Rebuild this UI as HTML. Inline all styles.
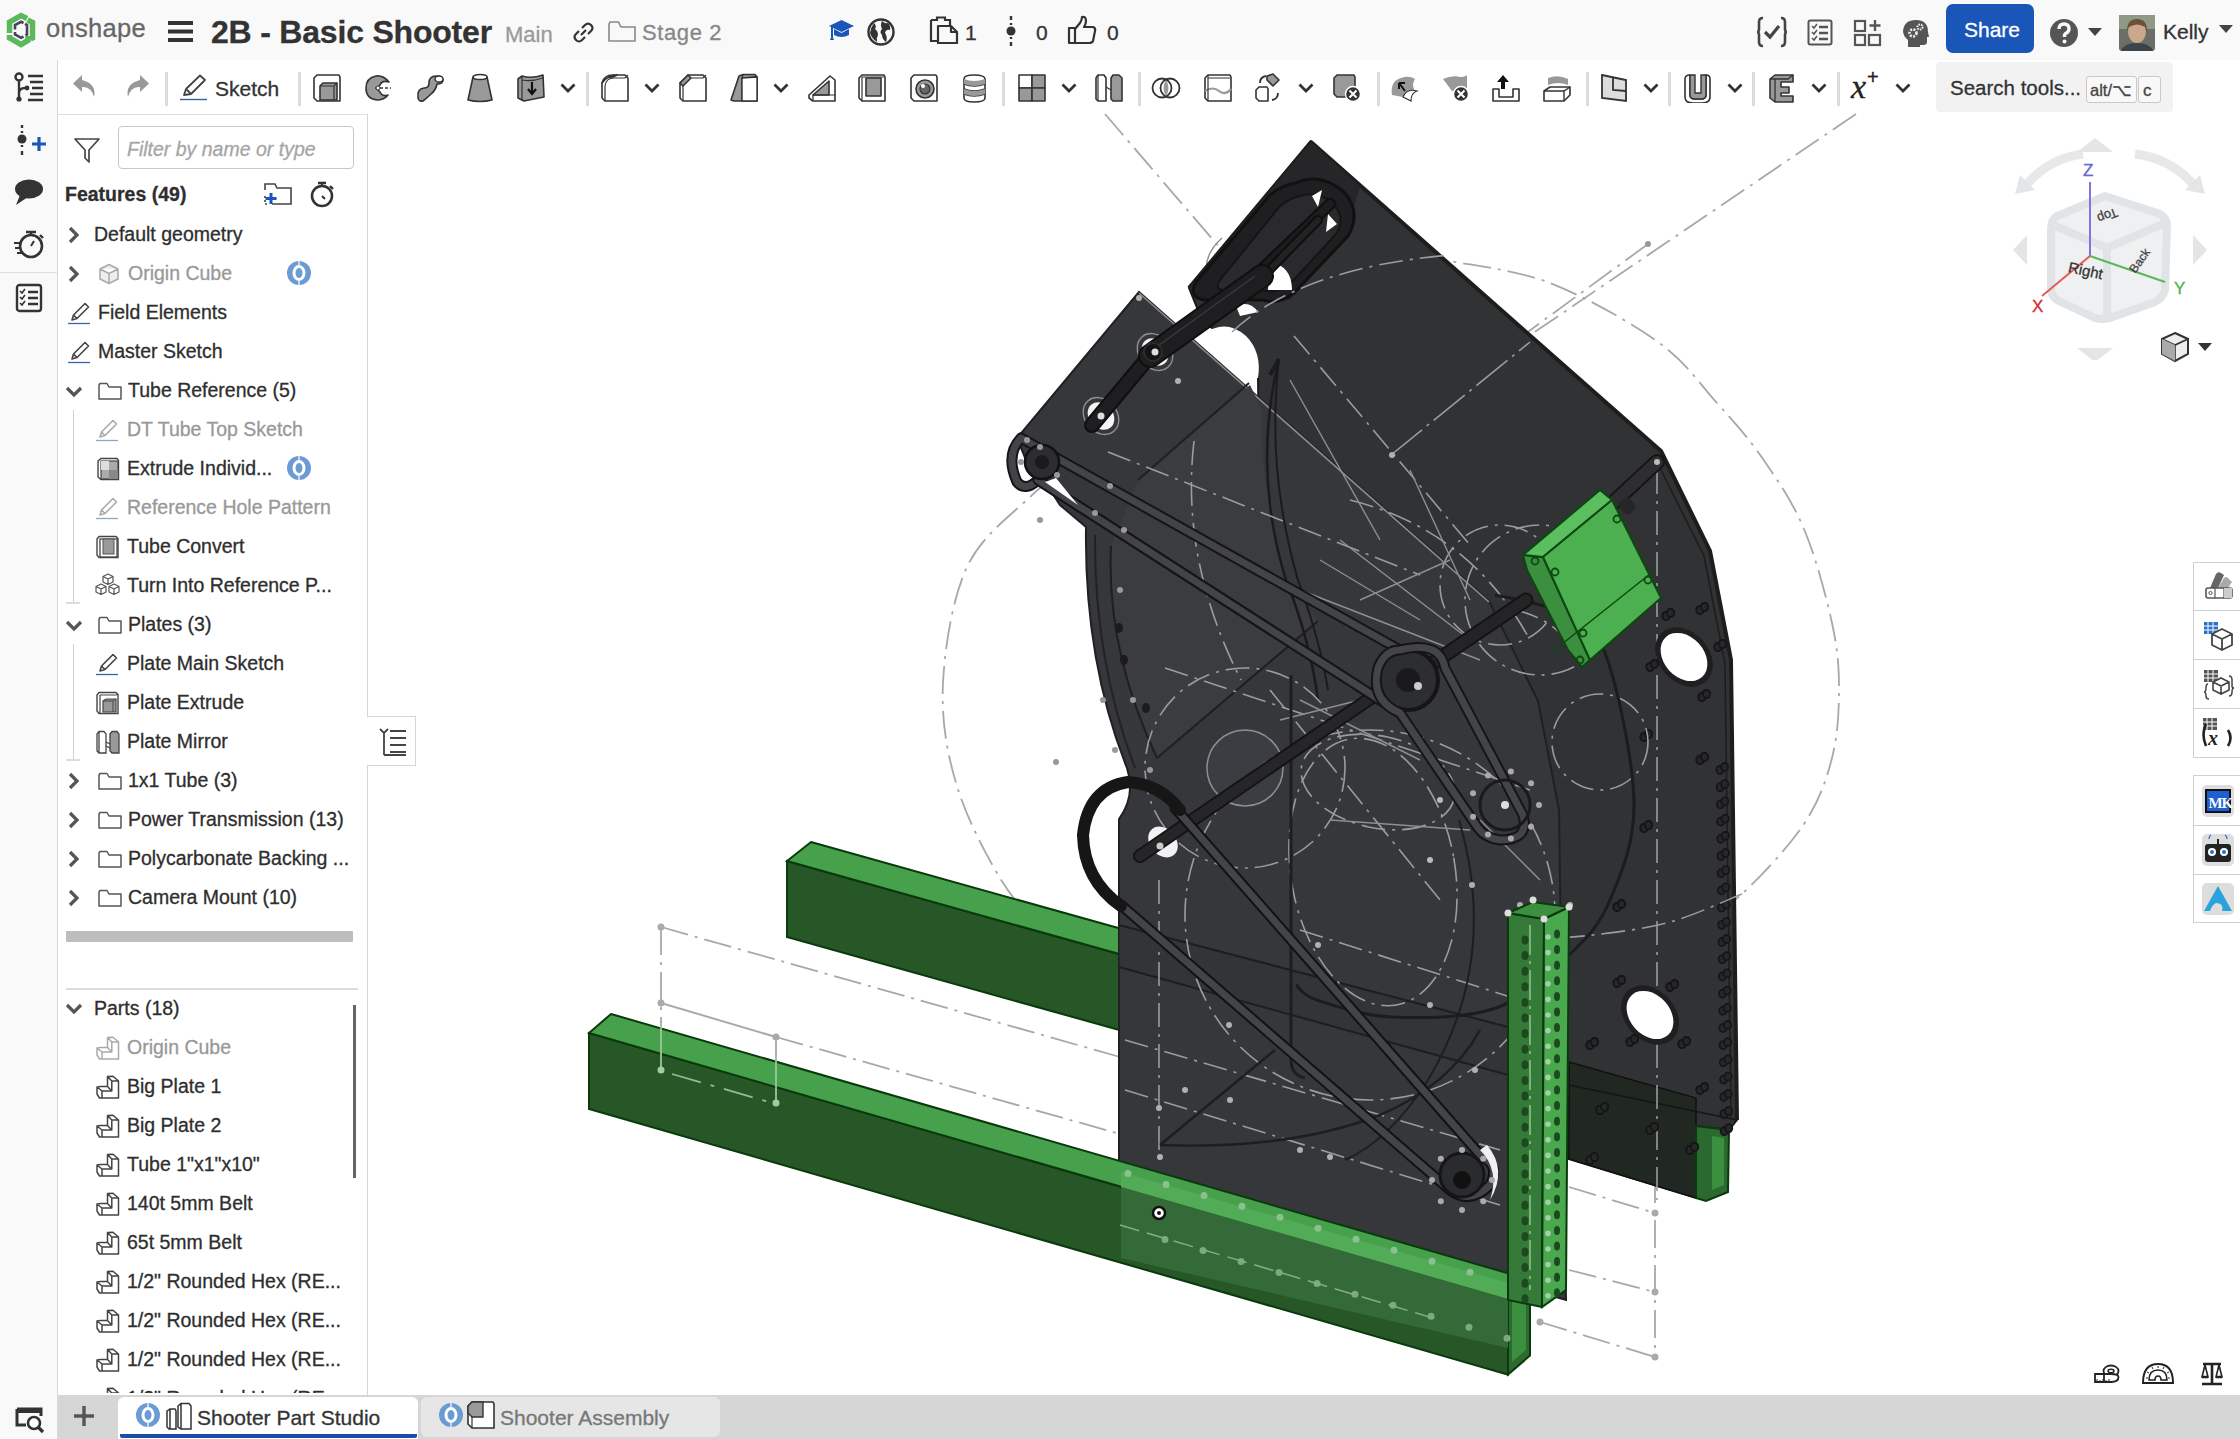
<!DOCTYPE html>
<html><head><meta charset="utf-8">
<style>
html,body{margin:0;padding:0;width:2240px;height:1439px;overflow:hidden;background:#fff;font-family:"Liberation Sans",sans-serif;color:#333;}
.a{position:absolute;}
.t{position:absolute;white-space:nowrap;line-height:1;-webkit-text-stroke:0.3px currentColor;}
</style></head>
<body>
<div class="a" style="left:0;top:0;width:2240px;height:60px;background:#f9f9f9"></div>
<div class="a" style="left:58px;top:60px;width:2182px;height:54px;background:#fff"></div>
<div class="a" style="left:0;top:60px;width:58px;height:1379px;background:#f9f9f9;border-right:1px solid #d9d9d9;box-sizing:border-box"></div>
<svg class="a" style="left:0;top:0" width="2240" height="1439" viewBox="0 0 2240 1439">
<path d="M1110,1000 C1100.0,989.8 1068.3,959.3 1050,939 C1031.7,918.7 1015.7,904.0 1000,878 C984.3,852.0 965.5,815.5 956,783 C946.5,750.5 941.2,719.0 943,683 C944.8,647.0 952.5,598.0 967,567 C981.5,536.0 1009.5,516.5 1030,497 C1050.5,477.5 1080.0,457.8 1090,450" stroke="#a8a8a8" stroke-width="1.8" fill="none" stroke-dasharray="28 7 3 7"/>
<path d="M1330,270 C1346.2,268.0 1407.0,259.5 1427,258 C1447.0,256.5 1429.5,256.8 1450,261 C1470.5,265.2 1515.3,269.5 1550,283 C1584.7,296.5 1630.2,322.0 1658,342 C1685.8,362.0 1699.5,383.5 1717,403 C1734.5,422.5 1748.5,438.0 1763,459 C1777.5,480.0 1792.5,501.7 1804,529 C1815.5,556.3 1826.2,596.3 1832,623 C1837.8,649.7 1839.0,666.5 1839,689 C1839.0,711.5 1837.8,735.5 1832,758 C1826.2,780.5 1819.0,801.3 1804,824 C1789.0,846.7 1759.3,878.0 1742,894 C1724.7,910.0 1707.0,915.7 1700,920" stroke="#a8a8a8" stroke-width="1.8" fill="none" stroke-dasharray="28 7 3 7"/>
<line x1="1105" y1="114" x2="1232" y2="262" stroke="#a8a8a8" stroke-width="1.8" fill="none" stroke-dasharray="28 7 3 7"/>
<path d="M1222,238 Q1203,255 1207,275" stroke="#8d8f93" stroke-width="1.4" fill="none"/>
<line x1="1856" y1="114" x2="1520" y2="342" stroke="#a8a8a8" stroke-width="1.8" fill="none" stroke-dasharray="28 7 3 7"/>
<line x1="1648" y1="244" x2="1525" y2="334" stroke="#a8a8a8" stroke-width="1.8" fill="none" stroke-dasharray="28 7 3 7"/>
<circle cx="1648" cy="244" r="3" fill="#999"/>
<circle cx="1040" cy="520" r="3" fill="#999"/>
<circle cx="1056" cy="762" r="3" fill="#999"/>
<polyline points="661,927 1120,1057" stroke="#a8a8a8" stroke-width="1.8" fill="none" stroke-dasharray="28 7 3 7"/>
<polyline points="661,927 661,1070" stroke="#a8a8a8" stroke-width="1.8" fill="none" stroke-dasharray="28 7 3 7"/>
<polyline points="661,1003 776,1037" stroke="#aaa" stroke-width="2" fill="none"/>
<polyline points="776,1037 1120,1134" stroke="#a8a8a8" stroke-width="1.8" fill="none" stroke-dasharray="28 7 3 7"/>
<polyline points="776,1037 776,1103" stroke="#a8a8a8" stroke-width="1.8" fill="none" stroke-dasharray="28 7 3 7"/>
<polyline points="661,1070 776,1103" stroke="#a8a8a8" stroke-width="1.8" fill="none" stroke-dasharray="28 7 3 7"/>
<circle cx="661" cy="927" r="3.5" fill="#aaa"/>
<circle cx="661" cy="1003" r="3.5" fill="#aaa"/>
<circle cx="776" cy="1037" r="3.5" fill="#aaa"/>
<polyline points="1569,1187 1655,1213" stroke="#a8a8a8" stroke-width="1.8" fill="none" stroke-dasharray="28 7 3 7"/>
<polyline points="1655,1130 1655,1357" stroke="#a8a8a8" stroke-width="1.8" fill="none" stroke-dasharray="28 7 3 7"/>
<polyline points="1569,1270 1655,1292" stroke="#a8a8a8" stroke-width="1.8" fill="none" stroke-dasharray="28 7 3 7"/>
<polyline points="1540,1322 1655,1357" stroke="#a8a8a8" stroke-width="1.8" fill="none" stroke-dasharray="28 7 3 7"/>
<circle cx="1655" cy="1213" r="3.5" fill="#aaa"/>
<circle cx="1655" cy="1292" r="3.5" fill="#aaa"/>
<circle cx="1655" cy="1357" r="3.5" fill="#aaa"/>
<circle cx="1540" cy="1322" r="3.5" fill="#aaa"/>
<polygon points="787.0,861.0 1707.0,1118.6 1707.0,1194.6 787.0,937.0" fill="#275627" stroke="#093a0b" stroke-width="2"/>
<polygon points="811.0,842.0 1731.0,1099.6 1707.0,1118.6 787.0,861.0" fill="#47a04b" stroke="#093a0b" stroke-width="2"/>
<polygon points="1311.0,142.0 1661.0,451.0 1710.0,551.0 1731.0,660.0 1737.0,1120.0 1729.0,1130.0 1696.0,1126.0 1696.0,1198.0 1569.0,1159.0 1291.0,1080.0 1291.0,669.0 1304.0,651.0 1308.0,624.0 1298.0,590.0 1282.0,555.0 1266.0,500.0 1259.0,450.0 1258.0,377.0 1232.0,355.0 1217.0,332.0 1202.0,320.0 1189.0,288.0" fill="#313234" stroke="#1a1a1a" stroke-width="2"/>
<polyline points="1189,288 1311,142 1661,451 1710,551 1731,660 1737,1120" fill="none" stroke="#1d1d1e" stroke-width="4" stroke-linejoin="round"/>
<polyline points="1655,458 1704,556 1725,664 1731,1118" fill="none" stroke="#1c1c1c" stroke-width="1.5"/>
<polygon points="1569,1062 1696,1098 1696,1198 1569,1159" fill="#212822" stroke="#111" stroke-width="1.5"/>
<polyline points="1569,1085 1737,1120" fill="none" stroke="#151515" stroke-width="1.5"/>
<polygon points="1696,1126 1729,1130 1728,1192 1706,1201 1696,1198" fill="#2b6a2e" stroke="#0b3a0d" stroke-width="2"/>
<polygon points="1712,1136 1724,1138 1724,1185 1712,1190" fill="#3d8f40"/>
<polygon points="1311,142 1360,186 1345,240 1290,300 1196,300 1189,288" fill="#262628"/>
<path d="M1296,183 Q1320,172 1344,192 Q1362,212 1348,236 L1295,292 Q1280,305 1262,300 L1203,300 Q1188,296 1196,282 L1270,195 Q1282,185 1296,183 Z" fill="#1f1f21" stroke="#111" stroke-width="3"/>
<path d="M1300,196 Q1318,190 1334,204 Q1346,220 1336,234 L1290,284 Q1278,294 1262,290 L1222,290 Q1214,288 1220,280 L1280,206 Q1290,198 1300,196 Z" fill="#2a2a2c" stroke="#151515" stroke-width="2"/>
<path d="M1312,196 L1322,190 L1318,207 Z M1328,214 L1337,224 L1326,232 Z" fill="#fff"/>
<path d="M1270,262 Q1292,266 1292,290 L1268,290 Z" fill="#fff"/>
<path d="M1236,306 Q1250,300 1258,312 L1240,316 Z" fill="#fff"/>
<path d="M1330,204 L1240,290" stroke="#0e0e0e" stroke-width="12" fill="none" stroke-linecap="round" stroke-linejoin="round"/>
<path d="M1330,204 L1240,290" stroke="#1c1c1e" stroke-width="8" fill="none" stroke-linecap="round" stroke-linejoin="round"/>
<path d="M1318,220 L1240,300" stroke="#0e0e0e" stroke-width="10" fill="none" stroke-linecap="round" stroke-linejoin="round"/>
<path d="M1318,220 L1240,300" stroke="#222224" stroke-width="6" fill="none" stroke-linecap="round" stroke-linejoin="round"/>
<path d="M1203,334 Q1226,318 1246,336 Q1262,352 1258,378 L1250,378 Z" fill="#fff"/>
<line x1="1294" y1="336" x2="1470" y2="545" stroke="#9a9ca0" stroke-width="1.6" fill="none" stroke-dasharray="24 7 3 7"/>
<line x1="1391" y1="455" x2="1530" y2="342" stroke="#9a9ca0" stroke-width="1.6" stroke-dasharray="40 6 3 6"/>
<path d="M1232,332 Q1300,268 1450,255" stroke="#9a9ca0" stroke-width="1.6" fill="none" stroke-dasharray="24 7 3 7"/>
<line x1="1657" y1="470" x2="1657" y2="1200" stroke="#9a9ca0" stroke-width="1.6" fill="none" stroke-dasharray="24 7 3 7"/>
<path d="M1515,610 Q1560,620 1580,660" stroke="#9a9ca0" stroke-width="1.6" fill="none" stroke-dasharray="24 7 3 7"/>
<ellipse cx="1684" cy="657" rx="33" ry="25" transform="rotate(48 1684 657)" fill="#1f1f21"/>
<ellipse cx="1684" cy="657" rx="27" ry="20" transform="rotate(48 1684 657)" fill="#fff"/>
<ellipse cx="1650" cy="1015" rx="33" ry="25" transform="rotate(48 1650 1015)" fill="#1f1f21"/>
<ellipse cx="1650" cy="1015" rx="27" ry="20" transform="rotate(48 1650 1015)" fill="#fff"/>
<g fill="#262729" stroke="#161617" stroke-width="1.8"><ellipse cx="1720.0" cy="770.0" rx="3.6" ry="4"/><ellipse cx="1724.5" cy="767.0" rx="3.6" ry="4"/></g>
<g fill="#262729" stroke="#161617" stroke-width="1.8"><ellipse cx="1720.2" cy="787.2" rx="3.6" ry="4"/><ellipse cx="1724.7" cy="784.2" rx="3.6" ry="4"/></g>
<g fill="#262729" stroke="#161617" stroke-width="1.8"><ellipse cx="1720.4" cy="804.4" rx="3.6" ry="4"/><ellipse cx="1724.9" cy="801.4" rx="3.6" ry="4"/></g>
<g fill="#262729" stroke="#161617" stroke-width="1.8"><ellipse cx="1720.6" cy="821.6" rx="3.6" ry="4"/><ellipse cx="1725.1" cy="818.6" rx="3.6" ry="4"/></g>
<g fill="#262729" stroke="#161617" stroke-width="1.8"><ellipse cx="1720.8" cy="838.8" rx="3.6" ry="4"/><ellipse cx="1725.3" cy="835.8" rx="3.6" ry="4"/></g>
<g fill="#262729" stroke="#161617" stroke-width="1.8"><ellipse cx="1721.0" cy="856.0" rx="3.6" ry="4"/><ellipse cx="1725.5" cy="853.0" rx="3.6" ry="4"/></g>
<g fill="#262729" stroke="#161617" stroke-width="1.8"><ellipse cx="1721.2" cy="873.2" rx="3.6" ry="4"/><ellipse cx="1725.7" cy="870.2" rx="3.6" ry="4"/></g>
<g fill="#262729" stroke="#161617" stroke-width="1.8"><ellipse cx="1721.4" cy="890.4" rx="3.6" ry="4"/><ellipse cx="1725.9" cy="887.4" rx="3.6" ry="4"/></g>
<g fill="#262729" stroke="#161617" stroke-width="1.8"><ellipse cx="1721.6" cy="907.6" rx="3.6" ry="4"/><ellipse cx="1726.1" cy="904.6" rx="3.6" ry="4"/></g>
<g fill="#262729" stroke="#161617" stroke-width="1.8"><ellipse cx="1721.8" cy="924.8" rx="3.6" ry="4"/><ellipse cx="1726.3" cy="921.8" rx="3.6" ry="4"/></g>
<g fill="#262729" stroke="#161617" stroke-width="1.8"><ellipse cx="1722.0" cy="942.0" rx="3.6" ry="4"/><ellipse cx="1726.5" cy="939.0" rx="3.6" ry="4"/></g>
<g fill="#262729" stroke="#161617" stroke-width="1.8"><ellipse cx="1722.2" cy="959.2" rx="3.6" ry="4"/><ellipse cx="1726.7" cy="956.2" rx="3.6" ry="4"/></g>
<g fill="#262729" stroke="#161617" stroke-width="1.8"><ellipse cx="1722.4" cy="976.4" rx="3.6" ry="4"/><ellipse cx="1726.9" cy="973.4" rx="3.6" ry="4"/></g>
<g fill="#262729" stroke="#161617" stroke-width="1.8"><ellipse cx="1722.6" cy="993.6" rx="3.6" ry="4"/><ellipse cx="1727.1" cy="990.6" rx="3.6" ry="4"/></g>
<g fill="#262729" stroke="#161617" stroke-width="1.8"><ellipse cx="1722.8" cy="1010.8" rx="3.6" ry="4"/><ellipse cx="1727.3" cy="1007.8" rx="3.6" ry="4"/></g>
<g fill="#262729" stroke="#161617" stroke-width="1.8"><ellipse cx="1723.0" cy="1028.0" rx="3.6" ry="4"/><ellipse cx="1727.5" cy="1025.0" rx="3.6" ry="4"/></g>
<g fill="#262729" stroke="#161617" stroke-width="1.8"><ellipse cx="1723.2" cy="1045.2" rx="3.6" ry="4"/><ellipse cx="1727.7" cy="1042.2" rx="3.6" ry="4"/></g>
<g fill="#262729" stroke="#161617" stroke-width="1.8"><ellipse cx="1723.4" cy="1062.4" rx="3.6" ry="4"/><ellipse cx="1727.9" cy="1059.4" rx="3.6" ry="4"/></g>
<g fill="#262729" stroke="#161617" stroke-width="1.8"><ellipse cx="1723.6" cy="1079.6" rx="3.6" ry="4"/><ellipse cx="1728.1" cy="1076.6" rx="3.6" ry="4"/></g>
<g fill="#262729" stroke="#161617" stroke-width="1.8"><ellipse cx="1723.8" cy="1096.8" rx="3.6" ry="4"/><ellipse cx="1728.3" cy="1093.8" rx="3.6" ry="4"/></g>
<g fill="#262729" stroke="#161617" stroke-width="1.8"><ellipse cx="1724.0" cy="1114.0" rx="3.6" ry="4"/><ellipse cx="1728.5" cy="1111.0" rx="3.6" ry="4"/></g>
<g fill="#262729" stroke="#161617" stroke-width="1.8"><ellipse cx="1724.2" cy="1131.2" rx="3.6" ry="4"/><ellipse cx="1728.7" cy="1128.2" rx="3.6" ry="4"/></g>
<g fill="#262729" stroke="#161617" stroke-width="1.8"><ellipse cx="1666" cy="616" rx="3.6" ry="4"/><ellipse cx="1670.5" cy="613" rx="3.6" ry="4"/></g>
<g fill="#262729" stroke="#161617" stroke-width="1.8"><ellipse cx="1666" cy="616" rx="3.6" ry="4"/><ellipse cx="1670.5" cy="613" rx="3.6" ry="4"/></g>
<g fill="#262729" stroke="#161617" stroke-width="1.8"><ellipse cx="1718" cy="647" rx="3.6" ry="4"/><ellipse cx="1722.5" cy="644" rx="3.6" ry="4"/></g>
<g fill="#262729" stroke="#161617" stroke-width="1.8"><ellipse cx="1718" cy="647" rx="3.6" ry="4"/><ellipse cx="1722.5" cy="644" rx="3.6" ry="4"/></g>
<g fill="#262729" stroke="#161617" stroke-width="1.8"><ellipse cx="1650" cy="667" rx="3.6" ry="4"/><ellipse cx="1654.5" cy="664" rx="3.6" ry="4"/></g>
<g fill="#262729" stroke="#161617" stroke-width="1.8"><ellipse cx="1650" cy="667" rx="3.6" ry="4"/><ellipse cx="1654.5" cy="664" rx="3.6" ry="4"/></g>
<g fill="#262729" stroke="#161617" stroke-width="1.8"><ellipse cx="1702" cy="697" rx="3.6" ry="4"/><ellipse cx="1706.5" cy="694" rx="3.6" ry="4"/></g>
<g fill="#262729" stroke="#161617" stroke-width="1.8"><ellipse cx="1702" cy="697" rx="3.6" ry="4"/><ellipse cx="1706.5" cy="694" rx="3.6" ry="4"/></g>
<g fill="#262729" stroke="#161617" stroke-width="1.8"><ellipse cx="1617" cy="983" rx="3.6" ry="4"/><ellipse cx="1621.5" cy="980" rx="3.6" ry="4"/></g>
<g fill="#262729" stroke="#161617" stroke-width="1.8"><ellipse cx="1617" cy="983" rx="3.6" ry="4"/><ellipse cx="1621.5" cy="980" rx="3.6" ry="4"/></g>
<g fill="#262729" stroke="#161617" stroke-width="1.8"><ellipse cx="1670" cy="987" rx="3.6" ry="4"/><ellipse cx="1674.5" cy="984" rx="3.6" ry="4"/></g>
<g fill="#262729" stroke="#161617" stroke-width="1.8"><ellipse cx="1670" cy="987" rx="3.6" ry="4"/><ellipse cx="1674.5" cy="984" rx="3.6" ry="4"/></g>
<g fill="#262729" stroke="#161617" stroke-width="1.8"><ellipse cx="1630" cy="1042" rx="3.6" ry="4"/><ellipse cx="1634.5" cy="1039" rx="3.6" ry="4"/></g>
<g fill="#262729" stroke="#161617" stroke-width="1.8"><ellipse cx="1630" cy="1042" rx="3.6" ry="4"/><ellipse cx="1634.5" cy="1039" rx="3.6" ry="4"/></g>
<g fill="#262729" stroke="#161617" stroke-width="1.8"><ellipse cx="1682" cy="1044" rx="3.6" ry="4"/><ellipse cx="1686.5" cy="1041" rx="3.6" ry="4"/></g>
<g fill="#262729" stroke="#161617" stroke-width="1.8"><ellipse cx="1682" cy="1044" rx="3.6" ry="4"/><ellipse cx="1686.5" cy="1041" rx="3.6" ry="4"/></g>
<g fill="#262729" stroke="#161617" stroke-width="1.8"><ellipse cx="1644" cy="737" rx="3.6" ry="4"/><ellipse cx="1648.5" cy="734" rx="3.6" ry="4"/></g>
<g fill="#262729" stroke="#161617" stroke-width="1.8"><ellipse cx="1644" cy="737" rx="3.6" ry="4"/><ellipse cx="1648.5" cy="734" rx="3.6" ry="4"/></g>
<g fill="#262729" stroke="#161617" stroke-width="1.8"><ellipse cx="1644" cy="828" rx="3.6" ry="4"/><ellipse cx="1648.5" cy="825" rx="3.6" ry="4"/></g>
<g fill="#262729" stroke="#161617" stroke-width="1.8"><ellipse cx="1644" cy="828" rx="3.6" ry="4"/><ellipse cx="1648.5" cy="825" rx="3.6" ry="4"/></g>
<g fill="#262729" stroke="#161617" stroke-width="1.8"><ellipse cx="1617" cy="907" rx="3.6" ry="4"/><ellipse cx="1621.5" cy="904" rx="3.6" ry="4"/></g>
<g fill="#262729" stroke="#161617" stroke-width="1.8"><ellipse cx="1617" cy="907" rx="3.6" ry="4"/><ellipse cx="1621.5" cy="904" rx="3.6" ry="4"/></g>
<g fill="#262729" stroke="#161617" stroke-width="1.8"><ellipse cx="1590" cy="1045" rx="3.6" ry="4"/><ellipse cx="1594.5" cy="1042" rx="3.6" ry="4"/></g>
<g fill="#262729" stroke="#161617" stroke-width="1.8"><ellipse cx="1590" cy="1045" rx="3.6" ry="4"/><ellipse cx="1594.5" cy="1042" rx="3.6" ry="4"/></g>
<g fill="#262729" stroke="#161617" stroke-width="1.8"><ellipse cx="1600" cy="1110" rx="3.6" ry="4"/><ellipse cx="1604.5" cy="1107" rx="3.6" ry="4"/></g>
<g fill="#262729" stroke="#161617" stroke-width="1.8"><ellipse cx="1600" cy="1110" rx="3.6" ry="4"/><ellipse cx="1604.5" cy="1107" rx="3.6" ry="4"/></g>
<g fill="#262729" stroke="#161617" stroke-width="1.8"><ellipse cx="1650" cy="1130" rx="3.6" ry="4"/><ellipse cx="1654.5" cy="1127" rx="3.6" ry="4"/></g>
<g fill="#262729" stroke="#161617" stroke-width="1.8"><ellipse cx="1650" cy="1130" rx="3.6" ry="4"/><ellipse cx="1654.5" cy="1127" rx="3.6" ry="4"/></g>
<g fill="#262729" stroke="#161617" stroke-width="1.8"><ellipse cx="1590" cy="1160" rx="3.6" ry="4"/><ellipse cx="1594.5" cy="1157" rx="3.6" ry="4"/></g>
<g fill="#262729" stroke="#161617" stroke-width="1.8"><ellipse cx="1590" cy="1160" rx="3.6" ry="4"/><ellipse cx="1594.5" cy="1157" rx="3.6" ry="4"/></g>
<g fill="#262729" stroke="#161617" stroke-width="1.8"><ellipse cx="1690" cy="1150" rx="3.6" ry="4"/><ellipse cx="1694.5" cy="1147" rx="3.6" ry="4"/></g>
<g fill="#262729" stroke="#161617" stroke-width="1.8"><ellipse cx="1690" cy="1150" rx="3.6" ry="4"/><ellipse cx="1694.5" cy="1147" rx="3.6" ry="4"/></g>
<g fill="#262729" stroke="#161617" stroke-width="1.8"><ellipse cx="1612" cy="542" rx="3.6" ry="4"/><ellipse cx="1616.5" cy="539" rx="3.6" ry="4"/></g>
<g fill="#262729" stroke="#161617" stroke-width="1.8"><ellipse cx="1612" cy="542" rx="3.6" ry="4"/><ellipse cx="1616.5" cy="539" rx="3.6" ry="4"/></g>
<g fill="#262729" stroke="#161617" stroke-width="1.8"><ellipse cx="1700" cy="610" rx="3.6" ry="4"/><ellipse cx="1704.5" cy="607" rx="3.6" ry="4"/></g>
<g fill="#262729" stroke="#161617" stroke-width="1.8"><ellipse cx="1700" cy="610" rx="3.6" ry="4"/><ellipse cx="1704.5" cy="607" rx="3.6" ry="4"/></g>
<g fill="#262729" stroke="#161617" stroke-width="1.8"><ellipse cx="1700" cy="760" rx="3.6" ry="4"/><ellipse cx="1704.5" cy="757" rx="3.6" ry="4"/></g>
<g fill="#262729" stroke="#161617" stroke-width="1.8"><ellipse cx="1700" cy="760" rx="3.6" ry="4"/><ellipse cx="1704.5" cy="757" rx="3.6" ry="4"/></g>
<g fill="#262729" stroke="#161617" stroke-width="1.8"><ellipse cx="1560" cy="1100" rx="3.6" ry="4"/><ellipse cx="1564.5" cy="1097" rx="3.6" ry="4"/></g>
<g fill="#262729" stroke="#161617" stroke-width="1.8"><ellipse cx="1560" cy="1100" rx="3.6" ry="4"/><ellipse cx="1564.5" cy="1097" rx="3.6" ry="4"/></g>
<g fill="#262729" stroke="#161617" stroke-width="1.8"><ellipse cx="1700" cy="1090" rx="3.6" ry="4"/><ellipse cx="1704.5" cy="1087" rx="3.6" ry="4"/></g>
<g fill="#262729" stroke="#161617" stroke-width="1.8"><ellipse cx="1700" cy="1090" rx="3.6" ry="4"/><ellipse cx="1704.5" cy="1087" rx="3.6" ry="4"/></g>
<path d="M1139,292 L1489,601 L1538,701 L1559,810 L1566,1300 L1119,1172 L1119,819 Q1136,796 1127,768 Q1084,660 1086,527 L1060,505 L1045,482 L1030,470 L1017,438 Z" fill="#35373b" stroke="#202022" stroke-width="2"/>
<polygon points="1119,925 1508,1027 1508,1075 1119,967" fill="#2e3336" opacity="0.6"/>
<polyline points="1119,925 1508,1027" stroke="#1c1f20" stroke-width="2" fill="none"/>
<polyline points="1119,967 1508,1075" stroke="#1c1f20" stroke-width="2" fill="none"/>
<line x1="1139" y1="293" x2="1489" y2="602" stroke="#8c8d90" stroke-width="1.6"/>
<path d="M1095,535 Q1094,660 1135,768" stroke="#222" stroke-width="2" fill="none"/>
<path d="M1138,480 L1250,385 L1262,410 Q1258,480 1288,580 L1318,621 L1157,758 Q1106,650 1111,546 Z" fill="#3a3c40" stroke="none"/>
<path d="M1157,758 L1318,621 M1157,758 Q1106,650 1111,546" fill="none" stroke="#1f1f21" stroke-width="2"/>
<line x1="1138" y1="480" x2="1249" y2="383" stroke="#1f1f21" stroke-width="2"/>
<path d="M1279,359 Q1252,470 1286,580 Q1310,640 1318,700" stroke="#1b1b1d" stroke-width="2.5" fill="none"/>
<path d="M1279,359 Q1266,470 1298,580 Q1320,640 1328,690" stroke="#1b1b1d" stroke-width="2" fill="none"/>
<path d="M1279,359 L1270,375" stroke="#1b1b1d" stroke-width="4" fill="none"/>
<circle cx="1245" cy="768" r="38" fill="#3a3d41" stroke="#8d8f93" stroke-width="1.5"/>
<circle cx="1245" cy="768" r="100" stroke="#9a9ca0" stroke-width="1.6" fill="none" stroke-dasharray="24 7 3 7"/>
<ellipse cx="1378" cy="782" rx="78" ry="46" transform="rotate(12 1378 782)" stroke="#9a9ca0" stroke-width="1.6" fill="none" stroke-dasharray="24 7 3 7"/>
<ellipse cx="1373" cy="872" rx="82" ry="135" transform="rotate(-10 1373 872)" stroke="#9a9ca0" stroke-width="1.6" fill="none" stroke-dasharray="24 7 3 7"/>
<circle cx="1370" cy="915" r="185" stroke="#9a9ca0" stroke-width="1.6" fill="none" stroke-dasharray="24 7 3 7"/>
<circle cx="1500" cy="585" r="60" stroke="#9a9ca0" stroke-width="1.6" fill="none" stroke-dasharray="24 7 3 7"/>
<circle cx="1540" cy="600" r="75" stroke="#9a9ca0" stroke-width="1.6" fill="none" stroke-dasharray="24 7 3 7"/>
<circle cx="1600" cy="742" r="48" stroke="#9a9ca0" stroke-width="1.6" fill="none" stroke-dasharray="24 7 3 7"/>
<path d="M1194,441 Q1180,560 1241,680" stroke="#9a9ca0" stroke-width="1.6" fill="none" stroke-dasharray="24 7 3 7"/>
<path d="M1350,500 Q1470,530 1530,640" stroke="#9a9ca0" stroke-width="1.6" fill="none" stroke-dasharray="24 7 3 7"/>
<line x1="1108" y1="452" x2="1420" y2="575" stroke="#9a9ca0" stroke-width="1.6" fill="none" stroke-dasharray="24 7 3 7"/>
<line x1="1165" y1="668" x2="1530" y2="790" stroke="#9a9ca0" stroke-width="1.6" fill="none" stroke-dasharray="24 7 3 7"/>
<line x1="1125" y1="1090" x2="1500" y2="1205" stroke="#9a9ca0" stroke-width="1.6" fill="none" stroke-dasharray="24 7 3 7"/>
<line x1="1125" y1="1040" x2="1500" y2="1150" stroke="#9a9ca0" stroke-width="1.6" fill="none" stroke-dasharray="24 7 3 7"/>
<line x1="1159" y1="880" x2="1159" y2="1165" stroke="#9a9ca0" stroke-width="1.6" fill="none" stroke-dasharray="24 7 3 7"/>
<line x1="1270" y1="690" x2="1440" y2="900" stroke="#9a9ca0" stroke-width="1.6" fill="none" stroke-dasharray="24 7 3 7"/>
<line x1="1300" y1="930" x2="1520" y2="1000" stroke="#9a9ca0" stroke-width="1.6" fill="none" stroke-dasharray="24 7 3 7"/>
<path d="M1320,560 L1420,620 M1340,540 L1470,640 M1360,600 L1450,560 M1300,590 L1480,660 M1290,380 L1380,540 M1410,470 L1470,600" stroke="#8d8f93" stroke-width="1.4" fill="none"/>
<path d="M1300,700 L1420,760 M1280,720 L1400,690 M1480,820 L1540,880 M1330,820 L1470,830" stroke="#8d8f93" stroke-width="1.4" fill="none"/>
<path d="M1495,595 C1505.8,597.8 1541.7,602.3 1560,612 C1578.3,621.7 1592.7,621.3 1605,653 C1617.3,684.7 1633.2,760.8 1634,802 C1634.8,843.2 1620.8,874.5 1610,900 C1599.2,925.5 1588.0,937.0 1569,955 C1550.0,973.0 1525.5,997.7 1496,1008 C1466.5,1018.3 1421.8,1018.3 1392,1017 C1362.2,1015.7 1333.0,1005.3 1317,1000 C1301.0,994.7 1299.5,987.5 1296,985" stroke="#1b1c1e" stroke-width="3" fill="none"/>
<path d="M1742,894 C1730.0,898.7 1694.8,915.2 1670,922 C1645.2,928.8 1618.0,932.0 1593,935 C1568.0,938.0 1532.2,939.2 1520,940" stroke="#9a9ca0" stroke-width="1.6" fill="none" stroke-dasharray="24 7 3 7"/>
<path d="M1291,675 L1291,1060 Q1291,1075 1305,1078" stroke="#1d1e20" stroke-width="3" fill="none"/>
<path d="M1160,1145 L1275,1050 M1160,1145 Q1290,1150 1380,1115 Q1450,1085 1480,1030" stroke="#1d1e20" stroke-width="2.5" fill="none"/>
<path d="M1459,820 Q1500,960 1428,1080 Q1390,1140 1345,1160" stroke="#1d1e20" stroke-width="2" fill="none"/>
<ellipse cx="1155" cy="352" rx="20" ry="16" transform="rotate(50 1155 352)" fill="none" stroke="#8d8f93" stroke-width="1.4"/>
<ellipse cx="1155" cy="352" rx="15" ry="12" transform="rotate(50 1155 352)" fill="#f4f4f4"/>
<ellipse cx="1101" cy="416" rx="20" ry="16" transform="rotate(50 1101 416)" fill="none" stroke="#8d8f93" stroke-width="1.4"/>
<ellipse cx="1101" cy="416" rx="15" ry="12" transform="rotate(50 1101 416)" fill="#f4f4f4"/>
<path d="M1153,352 L1092,425" stroke="#0f0f10" stroke-width="16" fill="none" stroke-linecap="round" stroke-linejoin="round"/>
<path d="M1153,352 L1092,425" stroke="#1e1e20" stroke-width="12" fill="none" stroke-linecap="round" stroke-linejoin="round"/>
<path d="M1262,276 L1150,356" stroke="#0f0f10" stroke-width="24" fill="none" stroke-linecap="round" stroke-linejoin="round"/>
<path d="M1262,276 L1150,356" stroke="#1e1e20" stroke-width="20" fill="none" stroke-linecap="round" stroke-linejoin="round"/>
<line x1="1255" y1="276" x2="1155" y2="348" stroke="#3a3a3c" stroke-width="1.5"/>
<circle cx="1153" cy="352" r="9" fill="#141415" stroke="#2c2c2e" stroke-width="2"/>
<circle cx="1155" cy="352" r="3.5" fill="#ddd"/>
<circle cx="1101" cy="416" r="3.5" fill="#ddd"/>
<ellipse cx="1163" cy="842" rx="17" ry="13" transform="rotate(50 1163 842)" fill="#f2f2f2"/>
<path d="M1140,856 L1400,678" stroke="#141414" stroke-width="14" fill="none" stroke-linecap="round" stroke-linejoin="round"/>
<path d="M1140,856 L1400,678" stroke="#262628" stroke-width="10" fill="none" stroke-linecap="round" stroke-linejoin="round"/>
<circle cx="1160" cy="846" r="3.5" fill="#ccc"/>
<path d="M1408,680 L1526,600" stroke="#141414" stroke-width="15" fill="none" stroke-linecap="round" stroke-linejoin="round"/>
<path d="M1408,680 L1526,600" stroke="#242426" stroke-width="11" fill="none" stroke-linecap="round" stroke-linejoin="round"/>
<path d="M1600,515 L1657,462" stroke="#141414" stroke-width="16" fill="none" stroke-linecap="round" stroke-linejoin="round"/>
<path d="M1600,515 L1657,462" stroke="#2e2e30" stroke-width="12" fill="none" stroke-linecap="round" stroke-linejoin="round"/>
<circle cx="1657" cy="462" r="3" fill="#bbb"/>
<path d="M1400,650 L1021,438 Q1005,455 1017,482 Q1025,492 1038,480 L1400,713" stroke="#151517" stroke-width="11" fill="none" stroke-linecap="round" stroke-linejoin="round"/>
<path d="M1400,650 L1021,438 Q1005,455 1017,482 Q1025,492 1038,480 L1400,713" stroke="#424448" stroke-width="7" fill="none" stroke-linecap="round" stroke-linejoin="round"/>
<path d="M1038,480 L1400,713" stroke="#151517" stroke-width="11" fill="none" stroke-linecap="round" stroke-linejoin="round"/>
<path d="M1038,480 L1400,713" stroke="#424448" stroke-width="7" fill="none" stroke-linecap="round" stroke-linejoin="round"/>
<circle cx="1042" cy="462" r="17" fill="#2c2d30" stroke="#111" stroke-width="2.5"/><circle cx="1042" cy="462" r="7" fill="#1a1a1a"/>
<path d="M1045,482 L1056,478 L1078,505 Z" fill="#fff"/>
<circle cx="1027" cy="440" r="3" fill="#999"/>
<circle cx="1040" cy="447" r="3" fill="#999"/>
<circle cx="1057" cy="475" r="3" fill="#999"/>
<circle cx="1095" cy="513" r="3" fill="#999"/>
<circle cx="1110" cy="486" r="3" fill="#999"/>
<circle cx="1021" cy="462" r="3" fill="#999"/>
<circle cx="1408" cy="680" r="30" fill="#2d2e31" stroke="#151517" stroke-width="4"/>
<circle cx="1408" cy="680" r="12" fill="#1a1a1c"/>
<path d="M1400,650 Q1440,640 1445,668 L1523,815 Q1530,840 1500,840 Q1485,838 1478,828 L1400,713 Q1370,700 1378,668 Q1385,650 1400,650" stroke="#151517" stroke-width="11" fill="none" stroke-linecap="round" stroke-linejoin="round"/>
<path d="M1400,650 Q1440,640 1445,668 L1523,815 Q1530,840 1500,840 Q1485,838 1478,828 L1400,713 Q1370,700 1378,668 Q1385,650 1400,650" stroke="#424448" stroke-width="7" fill="none" stroke-linecap="round" stroke-linejoin="round"/>
<circle cx="1505" cy="805" r="25" fill="none" stroke="#1a1a1c" stroke-width="3"/>
<circle cx="1539.0" cy="805.0" r="3" fill="#aaa"/>
<circle cx="1531.0455110660453" cy="826.8547787293423" r="3" fill="#aaa"/>
<circle cx="1510.9040380406757" cy="838.4834636024151" r="3" fill="#aaa"/>
<circle cx="1488.0" cy="834.444863728671" r="3" fill="#aaa"/>
<circle cx="1473.050450893279" cy="816.6286848730728" r="3" fill="#aaa"/>
<circle cx="1473.050450893279" cy="793.3713151269272" r="3" fill="#aaa"/>
<circle cx="1488.0" cy="775.555136271329" r="3" fill="#aaa"/>
<circle cx="1510.9040380406757" cy="771.5165363975849" r="3" fill="#aaa"/>
<circle cx="1531.0455110660453" cy="783.1452212706577" r="3" fill="#aaa"/>
<circle cx="1418" cy="686" r="4" fill="#ccc"/>
<circle cx="1505" cy="805" r="4" fill="#ddd"/>
<circle cx="1430" cy="860" r="3" fill="#bbb"/>
<circle cx="1440" cy="800" r="3" fill="#bbb"/>
<path d="M1121,905 L1450,1190 Q1470,1205 1490,1185 Q1500,1165 1482,1157 L1175,808" stroke="#121214" stroke-width="11" fill="none" stroke-linecap="round" stroke-linejoin="round"/>
<path d="M1121,905 L1450,1190 Q1470,1205 1490,1185 Q1500,1165 1482,1157 L1175,808" stroke="#424448" stroke-width="7" fill="none" stroke-linecap="round" stroke-linejoin="round"/>
<path d="M1180,810 Q1160,784 1128,782 Q1088,788 1083,835 Q1084,880 1121,906" stroke="#161617" stroke-width="12" fill="none" stroke-linecap="round"/>
<circle cx="1462" cy="1175" r="22" fill="#2a2b2e" stroke="#151517" stroke-width="3"/>
<path d="M1487,1145 Q1508,1170 1490,1200 Q1500,1170 1480,1150 Z" fill="#f0f0f0"/>
<circle cx="1462" cy="1180" r="9" fill="#111"/>
<circle cx="1492.0" cy="1180.0" r="3" fill="#aaa"/>
<circle cx="1483.2132034355964" cy="1201.2132034355964" r="3" fill="#aaa"/>
<circle cx="1462.0" cy="1210.0" r="3" fill="#aaa"/>
<circle cx="1440.7867965644036" cy="1201.2132034355964" r="3" fill="#aaa"/>
<circle cx="1432.0" cy="1180.0" r="3" fill="#aaa"/>
<circle cx="1440.7867965644036" cy="1158.7867965644036" r="3" fill="#aaa"/>
<circle cx="1462.0" cy="1150.0" r="3" fill="#aaa"/>
<circle cx="1483.2132034355964" cy="1158.7867965644036" r="3" fill="#aaa"/>
<circle cx="1139" cy="298" r="3" fill="#b0b0b0"/>
<circle cx="1178" cy="381" r="3" fill="#b0b0b0"/>
<circle cx="1392" cy="455" r="3" fill="#b0b0b0"/>
<circle cx="1300" cy="1150" r="3" fill="#b0b0b0"/>
<circle cx="1185" cy="1090" r="3" fill="#b0b0b0"/>
<circle cx="1229" cy="1025" r="3" fill="#b0b0b0"/>
<circle cx="1230" cy="1100" r="3" fill="#b0b0b0"/>
<circle cx="1159" cy="1108" r="3" fill="#b0b0b0"/>
<circle cx="1160" cy="1157" r="3" fill="#b0b0b0"/>
<circle cx="1330" cy="1157" r="3" fill="#b0b0b0"/>
<circle cx="1318" cy="945" r="3" fill="#b0b0b0"/>
<circle cx="1472" cy="885" r="3" fill="#b0b0b0"/>
<circle cx="1570" cy="905" r="3" fill="#b0b0b0"/>
<circle cx="1475" cy="1070" r="3" fill="#b0b0b0"/>
<circle cx="1430" cy="1005" r="3" fill="#b0b0b0"/>
<circle cx="1520" cy="905" r="3" fill="#b0b0b0"/>
<circle cx="1124" cy="530" r="3" fill="#999"/>
<circle cx="1120" cy="590" r="3" fill="#999"/>
<circle cx="1133" cy="700" r="3" fill="#999"/>
<circle cx="1150" cy="770" r="3" fill="#999"/>
<circle cx="1103" cy="700" r="3" fill="#999"/>
<circle cx="1115" cy="750" r="3" fill="#999"/>
<ellipse cx="1119" cy="628" rx="4" ry="5" fill="#1b1b1d"/>
<ellipse cx="1124" cy="660" rx="4" ry="5" fill="#1b1b1d"/>
<ellipse cx="1146" cy="708" rx="4" ry="5" fill="#1b1b1d"/>
<polygon points="589.0,1033.0 1508.0,1298.6 1508.0,1374.6 589.0,1109.0" fill="#275627" stroke="#093a0b" stroke-width="2"/>
<polygon points="611.0,1014.0 1530.0,1279.6 1508.0,1298.6 589.0,1033.0" fill="#47a04b" stroke="#093a0b" stroke-width="2"/>
<polygon points="1508.0,1298.6 1530.0,1279.6 1530.0,1355.6 1508.0,1374.6" fill="#2d6a30" stroke="#093a0b" stroke-width="2"/>
<polygon points="1512,1300 1526,1288 1526,1350 1512,1362" fill="#3d8f40"/>
<polygon points="1121,1187 1508,1299 1508,1348 1121,1258" fill="#336a37"/>
<polygon points="1121,1172 1508,1283 1508,1299 1121,1187" fill="#52ab56"/>
<circle cx="1128" cy="1173.413" r="3.5" fill="#8cc08e"/>
<circle cx="1166" cy="1184.395" r="3.5" fill="#8cc08e"/>
<circle cx="1204" cy="1195.377" r="3.5" fill="#8cc08e"/>
<circle cx="1242" cy="1206.359" r="3.5" fill="#8cc08e"/>
<circle cx="1280" cy="1217.341" r="3.5" fill="#8cc08e"/>
<circle cx="1318" cy="1228.3229999999999" r="3.5" fill="#8cc08e"/>
<circle cx="1356" cy="1239.305" r="3.5" fill="#8cc08e"/>
<circle cx="1394" cy="1250.287" r="3.5" fill="#8cc08e"/>
<circle cx="1432" cy="1261.269" r="3.5" fill="#8cc08e"/>
<circle cx="1470" cy="1272.251" r="3.5" fill="#8cc08e"/>
<circle cx="1165" cy="1239.464" r="3.5" fill="#7da87f"/>
<circle cx="1203" cy="1250.446" r="3.5" fill="#7da87f"/>
<circle cx="1241" cy="1261.4279999999999" r="3.5" fill="#7da87f"/>
<circle cx="1279" cy="1272.41" r="3.5" fill="#7da87f"/>
<circle cx="1317" cy="1283.392" r="3.5" fill="#7da87f"/>
<circle cx="1355" cy="1294.374" r="3.5" fill="#7da87f"/>
<circle cx="1393" cy="1305.356" r="3.5" fill="#7da87f"/>
<circle cx="1431" cy="1316.338" r="3.5" fill="#7da87f"/>
<circle cx="1469" cy="1327.32" r="3.5" fill="#7da87f"/>
<circle cx="1507" cy="1338.302" r="3.5" fill="#7da87f"/>
<polyline points="1120,1225 1440,1320" stroke="#80b080" stroke-width="1.5" stroke-dasharray="20 8" fill="none"/>
<line x1="661" y1="1025" x2="661" y2="1070" stroke="#9cc79e" stroke-width="1.8"/>
<line x1="776" y1="1058" x2="776" y2="1103" stroke="#9cc79e" stroke-width="1.8"/>
<polyline points="672,1074 776,1104" stroke="#98b89a" stroke-width="1.8" stroke-dasharray="30 10 4 10" fill="none"/>
<circle cx="661" cy="1070" r="3.5" fill="#a5c9a7"/><circle cx="776" cy="1103" r="3.5" fill="#a5c9a7"/>
<circle cx="1159" cy="1213" r="6" fill="#fff" stroke="#111" stroke-width="2.5"/><circle cx="1159" cy="1213" r="2" fill="#111"/>
<polygon points="1508.0,913.0 1544.0,919.0 1542.0,1307.0 1508.0,1300.0" fill="#367a3a" stroke="#093a0b" stroke-width="2"/>
<polygon points="1544.0,919.0 1569.0,907.0 1566.0,1290.0 1542.0,1307.0" fill="#4aa84e" stroke="#093a0b" stroke-width="2"/>
<polygon points="1508.0,913.0 1533.0,902.0 1569.0,907.0 1544.0,919.0" fill="#3b8f3f" stroke="#093a0b" stroke-width="2"/>
<ellipse cx="1525" cy="940.0" rx="3.5" ry="4.5" fill="#1c4a1e"/>
<ellipse cx="1557" cy="934.0" rx="3" ry="4.5" fill="#1c4a1e"/>
<circle cx="1548" cy="937.0" r="2.8" fill="#9fd2a2"/>
<ellipse cx="1525" cy="955.6" rx="3.5" ry="4.5" fill="#1c4a1e"/>
<ellipse cx="1557" cy="949.6" rx="3" ry="4.5" fill="#1c4a1e"/>
<circle cx="1548" cy="952.6" r="2.8" fill="#9fd2a2"/>
<ellipse cx="1525" cy="971.2" rx="3.5" ry="4.5" fill="#1c4a1e"/>
<ellipse cx="1557" cy="965.2" rx="3" ry="4.5" fill="#1c4a1e"/>
<circle cx="1548" cy="968.2" r="2.8" fill="#9fd2a2"/>
<ellipse cx="1525" cy="986.8" rx="3.5" ry="4.5" fill="#1c4a1e"/>
<ellipse cx="1557" cy="980.8" rx="3" ry="4.5" fill="#1c4a1e"/>
<circle cx="1548" cy="983.8" r="2.8" fill="#9fd2a2"/>
<ellipse cx="1525" cy="1002.4" rx="3.5" ry="4.5" fill="#1c4a1e"/>
<ellipse cx="1557" cy="996.4" rx="3" ry="4.5" fill="#1c4a1e"/>
<circle cx="1548" cy="999.4" r="2.8" fill="#9fd2a2"/>
<ellipse cx="1525" cy="1018.0" rx="3.5" ry="4.5" fill="#1c4a1e"/>
<ellipse cx="1557" cy="1012.0" rx="3" ry="4.5" fill="#1c4a1e"/>
<circle cx="1548" cy="1015.0" r="2.8" fill="#9fd2a2"/>
<ellipse cx="1525" cy="1033.6" rx="3.5" ry="4.5" fill="#1c4a1e"/>
<ellipse cx="1557" cy="1027.6" rx="3" ry="4.5" fill="#1c4a1e"/>
<circle cx="1548" cy="1030.6" r="2.8" fill="#9fd2a2"/>
<ellipse cx="1525" cy="1049.2" rx="3.5" ry="4.5" fill="#1c4a1e"/>
<ellipse cx="1557" cy="1043.2" rx="3" ry="4.5" fill="#1c4a1e"/>
<circle cx="1548" cy="1046.2" r="2.8" fill="#9fd2a2"/>
<ellipse cx="1525" cy="1064.8" rx="3.5" ry="4.5" fill="#1c4a1e"/>
<ellipse cx="1557" cy="1058.8" rx="3" ry="4.5" fill="#1c4a1e"/>
<circle cx="1548" cy="1061.8" r="2.8" fill="#9fd2a2"/>
<ellipse cx="1525" cy="1080.4" rx="3.5" ry="4.5" fill="#1c4a1e"/>
<ellipse cx="1557" cy="1074.4" rx="3" ry="4.5" fill="#1c4a1e"/>
<circle cx="1548" cy="1077.4" r="2.8" fill="#9fd2a2"/>
<ellipse cx="1525" cy="1096.0" rx="3.5" ry="4.5" fill="#1c4a1e"/>
<ellipse cx="1557" cy="1090.0" rx="3" ry="4.5" fill="#1c4a1e"/>
<circle cx="1548" cy="1093.0" r="2.8" fill="#9fd2a2"/>
<ellipse cx="1525" cy="1111.6" rx="3.5" ry="4.5" fill="#1c4a1e"/>
<ellipse cx="1557" cy="1105.6" rx="3" ry="4.5" fill="#1c4a1e"/>
<circle cx="1548" cy="1108.6" r="2.8" fill="#9fd2a2"/>
<ellipse cx="1525" cy="1127.2" rx="3.5" ry="4.5" fill="#1c4a1e"/>
<ellipse cx="1557" cy="1121.2" rx="3" ry="4.5" fill="#1c4a1e"/>
<circle cx="1548" cy="1124.2" r="2.8" fill="#9fd2a2"/>
<ellipse cx="1525" cy="1142.8" rx="3.5" ry="4.5" fill="#1c4a1e"/>
<ellipse cx="1557" cy="1136.8" rx="3" ry="4.5" fill="#1c4a1e"/>
<circle cx="1548" cy="1139.8" r="2.8" fill="#9fd2a2"/>
<ellipse cx="1525" cy="1158.4" rx="3.5" ry="4.5" fill="#1c4a1e"/>
<ellipse cx="1557" cy="1152.4" rx="3" ry="4.5" fill="#1c4a1e"/>
<circle cx="1548" cy="1155.4" r="2.8" fill="#9fd2a2"/>
<ellipse cx="1525" cy="1174.0" rx="3.5" ry="4.5" fill="#1c4a1e"/>
<ellipse cx="1557" cy="1168.0" rx="3" ry="4.5" fill="#1c4a1e"/>
<circle cx="1548" cy="1171.0" r="2.8" fill="#9fd2a2"/>
<ellipse cx="1525" cy="1189.6" rx="3.5" ry="4.5" fill="#1c4a1e"/>
<ellipse cx="1557" cy="1183.6" rx="3" ry="4.5" fill="#1c4a1e"/>
<circle cx="1548" cy="1186.6" r="2.8" fill="#9fd2a2"/>
<ellipse cx="1525" cy="1205.2" rx="3.5" ry="4.5" fill="#1c4a1e"/>
<ellipse cx="1557" cy="1199.2" rx="3" ry="4.5" fill="#1c4a1e"/>
<circle cx="1548" cy="1202.2" r="2.8" fill="#9fd2a2"/>
<ellipse cx="1525" cy="1220.8" rx="3.5" ry="4.5" fill="#1c4a1e"/>
<ellipse cx="1557" cy="1214.8" rx="3" ry="4.5" fill="#1c4a1e"/>
<circle cx="1548" cy="1217.8" r="2.8" fill="#9fd2a2"/>
<ellipse cx="1525" cy="1236.4" rx="3.5" ry="4.5" fill="#1c4a1e"/>
<ellipse cx="1557" cy="1230.4" rx="3" ry="4.5" fill="#1c4a1e"/>
<circle cx="1548" cy="1233.4" r="2.8" fill="#9fd2a2"/>
<ellipse cx="1525" cy="1252.0" rx="3.5" ry="4.5" fill="#1c4a1e"/>
<ellipse cx="1557" cy="1246.0" rx="3" ry="4.5" fill="#1c4a1e"/>
<circle cx="1548" cy="1249.0" r="2.8" fill="#9fd2a2"/>
<ellipse cx="1525" cy="1267.6" rx="3.5" ry="4.5" fill="#1c4a1e"/>
<ellipse cx="1557" cy="1261.6" rx="3" ry="4.5" fill="#1c4a1e"/>
<circle cx="1548" cy="1264.6" r="2.8" fill="#9fd2a2"/>
<ellipse cx="1525" cy="1283.2" rx="3.5" ry="4.5" fill="#1c4a1e"/>
<ellipse cx="1557" cy="1277.2" rx="3" ry="4.5" fill="#1c4a1e"/>
<circle cx="1548" cy="1280.2" r="2.8" fill="#9fd2a2"/>
<ellipse cx="1525" cy="1298.8" rx="3.5" ry="4.5" fill="#1c4a1e"/>
<ellipse cx="1557" cy="1292.8" rx="3" ry="4.5" fill="#1c4a1e"/>
<circle cx="1548" cy="1295.8" r="2.8" fill="#9fd2a2"/>
<circle cx="1508" cy="913" r="3.5" fill="#ddd"/>
<circle cx="1533" cy="900" r="3.5" fill="#ddd"/>
<circle cx="1569" cy="907" r="3.5" fill="#ddd"/>
<circle cx="1544" cy="919" r="3.5" fill="#ddd"/>
<line x1="1530" y1="925" x2="1530" y2="1290" stroke="#a8d8aa" stroke-width="1.2" stroke-dasharray="30 6 3 6"/>
<polygon points="1523,555 1543,557 1590,660 1582,667 1568,650 1527,570" fill="#3b8f3e" stroke="#0c480f" stroke-width="2"/>
<polygon points="1523,555 1600,490 1612,500 1543,557" fill="#5bbf5f" stroke="#0c480f" stroke-width="2"/>
<polygon points="1543,557 1612,500 1661,598 1590,660" fill="#4caf50" stroke="#0c480f" stroke-width="2"/>
<line x1="1552" y1="652" x2="1655" y2="570" stroke="#0c480f" stroke-width="1.5"/>
<circle cx="1617" cy="519" r="3.5" fill="none" stroke="#0c480f" stroke-width="1.8"/>
<circle cx="1555" cy="572" r="3.5" fill="none" stroke="#0c480f" stroke-width="1.8"/>
<circle cx="1648" cy="580" r="3.5" fill="none" stroke="#0c480f" stroke-width="1.8"/>
<circle cx="1583" cy="633" r="3.5" fill="none" stroke="#0c480f" stroke-width="1.8"/>
<circle cx="1535" cy="561" r="3.5" fill="none" stroke="#0c480f" stroke-width="1.8"/>
<circle cx="1580" cy="660" r="3.5" fill="none" stroke="#0c480f" stroke-width="1.8"/>
<rect x="1620" y="498" width="14" height="16" rx="5" fill="#262628" transform="rotate(-40 1627 506)"/>

</svg>
<div class="a" style="left:58px;top:114px;width:310px;height:1281px;background:#fff;border-right:1px solid #d6d6d6;border-top:1px solid #dedede;box-sizing:border-box"></div>
<div class="a" style="left:58px;top:1395px;width:2182px;height:44px;background:#d6d6d6"></div>
<svg class="a" style="left:68px;top:226.2px;" width="12" height="18" viewBox="0 0 12 18"><polyline points="2,2 9,9 2,16" fill="none" stroke="#555" stroke-width="3.2"/></svg>
<div class="t" style="left:94px;top:225.2px;font-size:19.5px;color:#2e2e2e;font-weight:400;">Default geometry</div>
<svg class="a" style="left:68px;top:265.2px;" width="12" height="18" viewBox="0 0 12 18"><polyline points="2,2 9,9 2,16" fill="none" stroke="#555" stroke-width="3.2"/></svg>
<svg class="a" style="left:98px;top:263.2px;" width="22" height="22" viewBox="0 0 22 22"><path d="M11,1.5 L20,6 L20,16 L11,20.5 L2,16 L2,6 Z M2,6 L11,10.5 L20,6 M11,10.5 L11,20.5" fill="#eee" stroke="#aaa" stroke-width="1.5" stroke-linejoin="round"/></svg>
<div class="t" style="left:128px;top:264.2px;font-size:19.5px;color:#999;font-weight:400;">Origin Cube</div>
<svg class="a" style="left:67px;top:301.2px;" width="24" height="24" viewBox="0 0 24 24"><path d="M5,19 L6.5,14 L18,2.5 L21.5,6 L10,17.5 Z M6.5,14 L10,17.5" fill="none" stroke="#444" stroke-width="1.6" stroke-linejoin="round"/><line x1="1" y1="22.5" x2="23" y2="22.5" stroke="#3a64a8" stroke-width="1.3"/></svg>
<div class="t" style="left:98px;top:303.2px;font-size:19.5px;color:#2e2e2e;font-weight:400;">Field Elements</div>
<svg class="a" style="left:67px;top:340.2px;" width="24" height="24" viewBox="0 0 24 24"><path d="M5,19 L6.5,14 L18,2.5 L21.5,6 L10,17.5 Z M6.5,14 L10,17.5" fill="none" stroke="#444" stroke-width="1.6" stroke-linejoin="round"/><line x1="1" y1="22.5" x2="23" y2="22.5" stroke="#3a64a8" stroke-width="1.3"/></svg>
<div class="t" style="left:98px;top:342.2px;font-size:19.5px;color:#2e2e2e;font-weight:400;">Master Sketch</div>
<svg class="a" style="left:65px;top:386.2px;" width="18" height="12" viewBox="0 0 18 12"><polyline points="2,2 9,9 16,2" fill="none" stroke="#555" stroke-width="3.2"/></svg>
<svg class="a" style="left:98px;top:382.2px;" width="24" height="18" viewBox="0 0 24 18"><path d="M1,3 L1,17 L23,17 L23,5 L11,5 L9,1.5 L2,1.5 Z" fill="none" stroke="#555" stroke-width="1.5" stroke-linejoin="round"/></svg>
<div class="t" style="left:128px;top:381.2px;font-size:19.5px;color:#2e2e2e;font-weight:400;">Tube Reference (5)</div>
<svg class="a" style="left:95px;top:418.2px;" width="24" height="24" viewBox="0 0 24 24"><path d="M5,19 L6.5,14 L18,2.5 L21.5,6 L10,17.5 Z M6.5,14 L10,17.5" fill="none" stroke="#aaa" stroke-width="1.6" stroke-linejoin="round"/><line x1="1" y1="22.5" x2="23" y2="22.5" stroke="#8ea6c8" stroke-width="1.3"/></svg>
<div class="t" style="left:127px;top:420.2px;font-size:19.5px;color:#999;font-weight:400;">DT Tube Top Sketch</div>
<svg class="a" style="left:96px;top:457.2px;" width="24" height="24" viewBox="0 0 24 24"><path d="M2,4 L5,1.5 L21,1.5 L22.5,3.5 L22.5,22.5 L5,22.5 L2,20 Z" fill="#fff" stroke="#444" stroke-width="1.4"/><rect x="5" y="4" width="17" height="18" fill="#aaa" stroke="#444" stroke-width="1.2"/><rect x="5" y="4" width="8" height="9" fill="#ddd"/><rect x="13" y="13" width="9" height="9" fill="#888"/></svg>
<div class="t" style="left:127px;top:459.2px;font-size:19.5px;color:#2e2e2e;font-weight:400;">Extrude Individ...</div>
<svg class="a" style="left:95px;top:496.20000000000005px;" width="24" height="24" viewBox="0 0 24 24"><path d="M5,19 L6.5,14 L18,2.5 L21.5,6 L10,17.5 Z M6.5,14 L10,17.5" fill="none" stroke="#aaa" stroke-width="1.6" stroke-linejoin="round"/><line x1="1" y1="22.5" x2="23" y2="22.5" stroke="#8ea6c8" stroke-width="1.3"/></svg>
<div class="t" style="left:127px;top:498.2px;font-size:19.5px;color:#999;font-weight:400;">Reference Hole Pattern</div>
<svg class="a" style="left:95px;top:535.2px;" width="24" height="24" viewBox="0 0 24 24"><path d="M2,4 L4,1.5 L21,1.5 L23,3.5 L23,22.5 L4,22.5 L2,20 Z" fill="#fff" stroke="#444" stroke-width="1.4"/><rect x="5" y="4" width="17" height="18" fill="#fff" stroke="#444" stroke-width="1.3"/><rect x="8" y="4" width="11" height="15" fill="#999" stroke="#555" stroke-width="1"/></svg>
<div class="t" style="left:127px;top:537.2px;font-size:19.5px;color:#2e2e2e;font-weight:400;">Tube Convert</div>
<svg class="a" style="left:94px;top:573.2px;" width="28" height="26" viewBox="0 0 28 26"><path d="M14,1 L19,3.5 L19,9 L14,11.5 L9,9 L9,3.5 Z M9,3.5 L14,6 L19,3.5 M14,6 L14,11.5" fill="#fff" stroke="#555" stroke-width="1.2" stroke-linejoin="round"/><path d="M7,11 L12,13.5 L12,19 L7,21.5 L2,19 L2,13.5 Z M2,13.5 L7,16 L12,13.5 M7,16 L7,21.5" fill="#fff" stroke="#555" stroke-width="1.2" stroke-linejoin="round"/><path d="M20,11 L25,13.5 L25,19 L20,21.5 L15,19 L15,13.5 Z M15,13.5 L20,16 L25,13.5 M20,16 L20,21.5" fill="#fff" stroke="#555" stroke-width="1.2" stroke-linejoin="round"/></svg>
<div class="t" style="left:127px;top:576.2px;font-size:19.5px;color:#2e2e2e;font-weight:400;">Turn Into Reference P...</div>
<svg class="a" style="left:65px;top:620.2px;" width="18" height="12" viewBox="0 0 18 12"><polyline points="2,2 9,9 16,2" fill="none" stroke="#555" stroke-width="3.2"/></svg>
<svg class="a" style="left:98px;top:616.2px;" width="24" height="18" viewBox="0 0 24 18"><path d="M1,3 L1,17 L23,17 L23,5 L11,5 L9,1.5 L2,1.5 Z" fill="none" stroke="#555" stroke-width="1.5" stroke-linejoin="round"/></svg>
<div class="t" style="left:128px;top:615.2px;font-size:19.5px;color:#2e2e2e;font-weight:400;">Plates (3)</div>
<svg class="a" style="left:95px;top:652.2px;" width="24" height="24" viewBox="0 0 24 24"><path d="M5,19 L6.5,14 L18,2.5 L21.5,6 L10,17.5 Z M6.5,14 L10,17.5" fill="none" stroke="#444" stroke-width="1.6" stroke-linejoin="round"/><line x1="1" y1="22.5" x2="23" y2="22.5" stroke="#3a64a8" stroke-width="1.3"/></svg>
<div class="t" style="left:127px;top:654.2px;font-size:19.5px;color:#2e2e2e;font-weight:400;">Plate Main Sketch</div>
<svg class="a" style="left:95px;top:691.2px;" width="24" height="24" viewBox="0 0 24 24"><path d="M2,4 L4,1.5 L21,1.5 L23,3.5 L23,22.5 L4,22.5 L2,20 Z" fill="#fff" stroke="#444" stroke-width="1.4"/><path d="M5,4 L21,4 L23,3.5 M5,4 L5,22.5" fill="none" stroke="#444" stroke-width="1.2"/><path d="M8,10 L11,8 L21,8 L21,21 L8,21 Z" fill="#999" stroke="#444" stroke-width="1.2"/><path d="M8,10 L18,10 L21,8 M18,10 L18,21" fill="none" stroke="#444" stroke-width="1"/></svg>
<div class="t" style="left:127px;top:693.2px;font-size:19.5px;color:#2e2e2e;font-weight:400;">Plate Extrude</div>
<svg class="a" style="left:95px;top:730.2px;" width="26" height="24" viewBox="0 0 26 24"><path d="M2,4 L4,1.5 L9,1.5 L11,4 L11,23 L4,23 L2,21 Z M4,1.5 L4,23" fill="#fff" stroke="#444" stroke-width="1.3"/><path d="M15,4 L17,1.5 L22,1.5 L24,4 L24,23 L17,23 L15,21 Z" fill="#999" stroke="#444" stroke-width="1.3"/><path d="M11,12 L15,14 M11,16 L15,18" stroke="#444" stroke-width="1.2"/></svg>
<div class="t" style="left:127px;top:732.2px;font-size:19.5px;color:#2e2e2e;font-weight:400;">Plate Mirror</div>
<svg class="a" style="left:68px;top:772.2px;" width="12" height="18" viewBox="0 0 12 18"><polyline points="2,2 9,9 2,16" fill="none" stroke="#555" stroke-width="3.2"/></svg>
<svg class="a" style="left:98px;top:772.2px;" width="24" height="18" viewBox="0 0 24 18"><path d="M1,3 L1,17 L23,17 L23,5 L11,5 L9,1.5 L2,1.5 Z" fill="none" stroke="#555" stroke-width="1.5" stroke-linejoin="round"/></svg>
<div class="t" style="left:128px;top:771.2px;font-size:19.5px;color:#2e2e2e;font-weight:400;">1x1 Tube (3)</div>
<svg class="a" style="left:68px;top:811.2px;" width="12" height="18" viewBox="0 0 12 18"><polyline points="2,2 9,9 2,16" fill="none" stroke="#555" stroke-width="3.2"/></svg>
<svg class="a" style="left:98px;top:811.2px;" width="24" height="18" viewBox="0 0 24 18"><path d="M1,3 L1,17 L23,17 L23,5 L11,5 L9,1.5 L2,1.5 Z" fill="none" stroke="#555" stroke-width="1.5" stroke-linejoin="round"/></svg>
<div class="t" style="left:128px;top:810.2px;font-size:19.5px;color:#2e2e2e;font-weight:400;">Power Transmission (13)</div>
<svg class="a" style="left:68px;top:850.2px;" width="12" height="18" viewBox="0 0 12 18"><polyline points="2,2 9,9 2,16" fill="none" stroke="#555" stroke-width="3.2"/></svg>
<svg class="a" style="left:98px;top:850.2px;" width="24" height="18" viewBox="0 0 24 18"><path d="M1,3 L1,17 L23,17 L23,5 L11,5 L9,1.5 L2,1.5 Z" fill="none" stroke="#555" stroke-width="1.5" stroke-linejoin="round"/></svg>
<div class="t" style="left:128px;top:849.2px;font-size:19.5px;color:#2e2e2e;font-weight:400;">Polycarbonate Backing ...</div>
<svg class="a" style="left:68px;top:889.2px;" width="12" height="18" viewBox="0 0 12 18"><polyline points="2,2 9,9 2,16" fill="none" stroke="#555" stroke-width="3.2"/></svg>
<svg class="a" style="left:98px;top:889.2px;" width="24" height="18" viewBox="0 0 24 18"><path d="M1,3 L1,17 L23,17 L23,5 L11,5 L9,1.5 L2,1.5 Z" fill="none" stroke="#555" stroke-width="1.5" stroke-linejoin="round"/></svg>
<div class="t" style="left:128px;top:888.2px;font-size:19.5px;color:#2e2e2e;font-weight:400;">Camera Mount (10)</div>
<svg class="a" style="left:286px;top:260px;" width="26" height="26" viewBox="0 0 26 26"><circle cx="13" cy="13" r="12" fill="#6a9bd3"/><ellipse cx="13" cy="13" rx="5" ry="6.5" fill="none" stroke="#fff" stroke-width="3"/><line x1="13" y1="1" x2="13" y2="5" stroke="#fff" stroke-width="1.2"/><line x1="13" y1="21" x2="13" y2="25" stroke="#fff" stroke-width="1.2"/></svg>
<svg class="a" style="left:286px;top:455px;" width="26" height="26" viewBox="0 0 26 26"><circle cx="13" cy="13" r="12" fill="#6a9bd3"/><ellipse cx="13" cy="13" rx="5" ry="6.5" fill="none" stroke="#fff" stroke-width="3"/><line x1="13" y1="1" x2="13" y2="5" stroke="#fff" stroke-width="1.2"/><line x1="13" y1="21" x2="13" y2="25" stroke="#fff" stroke-width="1.2"/></svg>
<div class="a" style="left:73px;top:410px;width:1px;height:192px;background:#cfcfcf"></div>
<div class="a" style="left:66px;top:602px;width:14px;height:2px;background:#dcdcdc"></div>
<div class="a" style="left:73px;top:644px;width:1px;height:115px;background:#cfcfcf"></div>
<div class="a" style="left:66px;top:759px;width:14px;height:2px;background:#dcdcdc"></div>
<div class="t" style="left:65px;top:185.0px;font-size:19.5px;color:#2e2e2e;font-weight:700;">Features (49)</div>
<svg class="a" style="left:262px;top:182px;" width="31" height="24" viewBox="0 0 31 24"><path d="M3,8 L3,2 L13,2 L15,6 L29,6 L29,22 L10,22" fill="none" stroke="#444" stroke-width="1.6"/><path d="M3,14 L3,22 L6,22" fill="none" stroke="#444" stroke-width="1.6" stroke-dasharray="2 2"/><path d="M9,11 L9,22 M3.5,16.5 L14.5,16.5" stroke="#1a56b8" stroke-width="3"/></svg>
<svg class="a" style="left:308px;top:180px;" width="28" height="28" viewBox="0 0 28 28"><circle cx="14" cy="16" r="10" fill="none" stroke="#333" stroke-width="2.6"/><line x1="10" y1="3" x2="18" y2="3" stroke="#333" stroke-width="2.6"/><line x1="14" y1="3" x2="14" y2="6" stroke="#333" stroke-width="2"/><line x1="22" y1="6" x2="25" y2="9" stroke="#333" stroke-width="2.4"/><line x1="14" y1="16" x2="17" y2="19" stroke="#333" stroke-width="2"/></svg>
<svg class="a" style="left:73px;top:136px;" width="28" height="28" viewBox="0 0 28 28"><path d="M2,3 L26,3 L16,14 L16,26 L12,22 L12,14 Z" fill="none" stroke="#444" stroke-width="1.7" stroke-linejoin="round"/></svg>
<div class="a" style="left:118px;top:126px;width:236px;height:43px;border:1px solid #c8c8c8;border-radius:4px;box-sizing:border-box;background:#fff"></div>
<div class="t" style="left:127px;top:139.5px;font-size:19.5px;color:#a6a6a6;font-weight:400;font-style:italic;">Filter by name or type</div>
<div class="a" style="left:66px;top:931px;width:287px;height:11px;background:#bdbdbd;border-radius:1px"></div>
<div class="a" style="left:66px;top:988px;width:292px;height:2px;background:#dcdcdc"></div>
<svg class="a" style="left:65px;top:1003px;" width="18" height="12" viewBox="0 0 18 12"><polyline points="2,2 9,9 16,2" fill="none" stroke="#555" stroke-width="3.2"/></svg>
<div class="t" style="left:94px;top:999.3px;font-size:19.5px;color:#2e2e2e;font-weight:400;">Parts (18)</div>
<div class="a" style="left:58px;top:1020px;width:300px;height:373px;overflow:hidden">
<svg class="a" style="left:38px;top:16.299999999999955px;" width="24" height="24" viewBox="0 0 24 24"><path d="M11.5,1.5 L17,1.2 L22.5,6 L22.5,23 L3.5,23 L1,19 L1,12 L4.5,11.5 L11.5,11.5 Z M11.5,1.5 L15.8,6 L22.5,6 M15.8,6 L15.8,16 L6,16 L1,12 M11.5,11.5 L15.8,16 M6,16 L6,23" fill="#fff" stroke="#aaa" stroke-width="1.5" stroke-linejoin="round"/></svg>
<div class="t" style="left:69px;top:18.3px;font-size:19.5px;color:#999;font-weight:400;">Origin Cube</div>
<svg class="a" style="left:38px;top:55.299999999999955px;" width="24" height="24" viewBox="0 0 24 24"><path d="M11.5,1.5 L17,1.2 L22.5,6 L22.5,23 L3.5,23 L1,19 L1,12 L4.5,11.5 L11.5,11.5 Z M11.5,1.5 L15.8,6 L22.5,6 M15.8,6 L15.8,16 L6,16 L1,12 M11.5,11.5 L15.8,16 M6,16 L6,23" fill="#fff" stroke="#444" stroke-width="1.5" stroke-linejoin="round"/></svg>
<div class="t" style="left:69px;top:57.3px;font-size:19.5px;color:#2e2e2e;font-weight:400;">Big Plate 1</div>
<svg class="a" style="left:38px;top:94.29999999999995px;" width="24" height="24" viewBox="0 0 24 24"><path d="M11.5,1.5 L17,1.2 L22.5,6 L22.5,23 L3.5,23 L1,19 L1,12 L4.5,11.5 L11.5,11.5 Z M11.5,1.5 L15.8,6 L22.5,6 M15.8,6 L15.8,16 L6,16 L1,12 M11.5,11.5 L15.8,16 M6,16 L6,23" fill="#fff" stroke="#444" stroke-width="1.5" stroke-linejoin="round"/></svg>
<div class="t" style="left:69px;top:96.3px;font-size:19.5px;color:#2e2e2e;font-weight:400;">Big Plate 2</div>
<svg class="a" style="left:38px;top:133.29999999999995px;" width="24" height="24" viewBox="0 0 24 24"><path d="M11.5,1.5 L17,1.2 L22.5,6 L22.5,23 L3.5,23 L1,19 L1,12 L4.5,11.5 L11.5,11.5 Z M11.5,1.5 L15.8,6 L22.5,6 M15.8,6 L15.8,16 L6,16 L1,12 M11.5,11.5 L15.8,16 M6,16 L6,23" fill="#fff" stroke="#444" stroke-width="1.5" stroke-linejoin="round"/></svg>
<div class="t" style="left:69px;top:135.3px;font-size:19.5px;color:#2e2e2e;font-weight:400;">Tube 1"x1"x10"</div>
<svg class="a" style="left:38px;top:172.29999999999995px;" width="24" height="24" viewBox="0 0 24 24"><path d="M11.5,1.5 L17,1.2 L22.5,6 L22.5,23 L3.5,23 L1,19 L1,12 L4.5,11.5 L11.5,11.5 Z M11.5,1.5 L15.8,6 L22.5,6 M15.8,6 L15.8,16 L6,16 L1,12 M11.5,11.5 L15.8,16 M6,16 L6,23" fill="#fff" stroke="#444" stroke-width="1.5" stroke-linejoin="round"/></svg>
<div class="t" style="left:69px;top:174.3px;font-size:19.5px;color:#2e2e2e;font-weight:400;">140t 5mm Belt</div>
<svg class="a" style="left:38px;top:211.29999999999995px;" width="24" height="24" viewBox="0 0 24 24"><path d="M11.5,1.5 L17,1.2 L22.5,6 L22.5,23 L3.5,23 L1,19 L1,12 L4.5,11.5 L11.5,11.5 Z M11.5,1.5 L15.8,6 L22.5,6 M15.8,6 L15.8,16 L6,16 L1,12 M11.5,11.5 L15.8,16 M6,16 L6,23" fill="#fff" stroke="#444" stroke-width="1.5" stroke-linejoin="round"/></svg>
<div class="t" style="left:69px;top:213.3px;font-size:19.5px;color:#2e2e2e;font-weight:400;">65t 5mm Belt</div>
<svg class="a" style="left:38px;top:250.29999999999995px;" width="24" height="24" viewBox="0 0 24 24"><path d="M11.5,1.5 L17,1.2 L22.5,6 L22.5,23 L3.5,23 L1,19 L1,12 L4.5,11.5 L11.5,11.5 Z M11.5,1.5 L15.8,6 L22.5,6 M15.8,6 L15.8,16 L6,16 L1,12 M11.5,11.5 L15.8,16 M6,16 L6,23" fill="#fff" stroke="#444" stroke-width="1.5" stroke-linejoin="round"/></svg>
<div class="t" style="left:69px;top:252.3px;font-size:19.5px;color:#2e2e2e;font-weight:400;">1/2" Rounded Hex (RE...</div>
<svg class="a" style="left:38px;top:289.29999999999995px;" width="24" height="24" viewBox="0 0 24 24"><path d="M11.5,1.5 L17,1.2 L22.5,6 L22.5,23 L3.5,23 L1,19 L1,12 L4.5,11.5 L11.5,11.5 Z M11.5,1.5 L15.8,6 L22.5,6 M15.8,6 L15.8,16 L6,16 L1,12 M11.5,11.5 L15.8,16 M6,16 L6,23" fill="#fff" stroke="#444" stroke-width="1.5" stroke-linejoin="round"/></svg>
<div class="t" style="left:69px;top:291.3px;font-size:19.5px;color:#2e2e2e;font-weight:400;">1/2" Rounded Hex (RE...</div>
<svg class="a" style="left:38px;top:328.29999999999995px;" width="24" height="24" viewBox="0 0 24 24"><path d="M11.5,1.5 L17,1.2 L22.5,6 L22.5,23 L3.5,23 L1,19 L1,12 L4.5,11.5 L11.5,11.5 Z M11.5,1.5 L15.8,6 L22.5,6 M15.8,6 L15.8,16 L6,16 L1,12 M11.5,11.5 L15.8,16 M6,16 L6,23" fill="#fff" stroke="#444" stroke-width="1.5" stroke-linejoin="round"/></svg>
<div class="t" style="left:69px;top:330.3px;font-size:19.5px;color:#2e2e2e;font-weight:400;">1/2" Rounded Hex (RE...</div>
<svg class="a" style="left:38px;top:367.29999999999995px;" width="24" height="24" viewBox="0 0 24 24"><path d="M11.5,1.5 L17,1.2 L22.5,6 L22.5,23 L3.5,23 L1,19 L1,12 L4.5,11.5 L11.5,11.5 Z M11.5,1.5 L15.8,6 L22.5,6 M15.8,6 L15.8,16 L6,16 L1,12 M11.5,11.5 L15.8,16 M6,16 L6,23" fill="#fff" stroke="#444" stroke-width="1.5" stroke-linejoin="round"/></svg>
<div class="t" style="left:69px;top:369.3px;font-size:19.5px;color:#2e2e2e;font-weight:400;">1/2" Rounded Hex (RE...</div>
</div>
<div class="a" style="left:353px;top:1005px;width:3px;height:173px;background:#666"></div>
<div class="a" style="left:367px;top:716px;width:49px;height:50px;background:#fff;border:1px solid #d6d6d6;border-left:none;box-sizing:border-box"></div>
<svg class="a" style="left:376px;top:726px;" width="32" height="32" viewBox="0 0 32 32"><path d="M4,3 L8,7 L12,3 M8,7 L8,29" fill="none" stroke="#444" stroke-width="1.8"/><path d="M14,5 L30,5 M14,12 L30,12 M14,19 L30,19 M14,26 L30,26 M8,29 L30,29" stroke="#444" stroke-width="1.8"/></svg>
<svg class="a" style="left:13px;top:72px;" width="34" height="32" viewBox="0 0 34 32"><circle cx="6" cy="5" r="3.5" fill="none" stroke="#333" stroke-width="2.4"/><path d="M6,9 L6,26 M6,21 Q6,16 12,16" fill="none" stroke="#333" stroke-width="2.4"/><circle cx="6" cy="27" r="2.6" fill="#333"/><circle cx="14" cy="16" r="2.4" fill="#333"/><path d="M15,4 L30,4 M17,10 L30,10 M19,16 L30,16 M17,22 L30,22 M15,28 L30,28" stroke="#333" stroke-width="2.6"/></svg>
<svg class="a" style="left:14px;top:122px;" width="34" height="36" viewBox="0 0 34 36"><path d="M8,3 L8,6 M8,29 L8,33" stroke="#333" stroke-width="2.4"/><circle cx="8" cy="17" r="4.5" fill="#333"/><path d="M8,9 L8,11 M8,23 L8,25" stroke="#333" stroke-width="2.4"/><path d="M25,15 L25,29 M18,22 L32,22" stroke="#1a56b8" stroke-width="3.2"/></svg>
<svg class="a" style="left:14px;top:178px;" width="30" height="28" viewBox="0 0 30 28"><ellipse cx="15" cy="11" rx="14" ry="9.5" fill="#333"/><path d="M6,17 L2,27 L14,19 Z" fill="#333"/></svg>
<svg class="a" style="left:13px;top:229px;" width="34" height="32" viewBox="0 0 34 32"><circle cx="18" cy="17" r="11" fill="none" stroke="#333" stroke-width="2.6"/><path d="M13,3 L23,3 M18,3 L18,6 M27,6 L30,9" stroke="#333" stroke-width="2.4"/><path d="M18,17 L21,12" stroke="#333" stroke-width="2"/><path d="M1,14 L8,14 M2,19 L8,19 M4,24 L9,24" stroke="#333" stroke-width="1.8"/></svg>
<div class="a" style="left:0px;top:272px;width:58px;height:1px;background:#ddd"></div>
<svg class="a" style="left:15px;top:283px;" width="28" height="30" viewBox="0 0 28 30"><rect x="2" y="2" width="24" height="26" rx="2.5" fill="none" stroke="#333" stroke-width="2.4"/><path d="M5,8 L7,10 L10,6 M5,14 L7,16 L10,12 M5,20 L7,22 L10,18" fill="none" stroke="#333" stroke-width="1.6"/><path d="M13,9 L23,9 M13,15 L23,15 M13,21 L23,21" stroke="#333" stroke-width="2.6"/></svg>
<svg class="a" style="left:14px;top:1405px;" width="32" height="30" viewBox="0 0 32 30"><path d="M3,4 L27,4 L27,11 M3,4 L3,20 L12,20" fill="none" stroke="#333" stroke-width="3"/><rect x="3" y="4" width="24" height="4" fill="#333"/><circle cx="20" cy="18" r="6" fill="#fff" stroke="#333" stroke-width="2.6"/><path d="M24,22 L29,27" stroke="#333" stroke-width="3.2"/></svg>
<svg class="a" style="left:5px;top:12px;" width="32" height="36" viewBox="0 0 32 36"><g fill="none" stroke="#5cb85c" stroke-width="5.5" stroke-linejoin="miter"><path d="M22,6.5 L16,3.5 L4.5,10 L4.5,21"/><path d="M19.5,5.5 M22.5,8 L27.5,10.5 L27.5,26 L25.5,27.2"/><path d="M4.5,23 L4.5,26 L16,32.5 L23,28.5 L23,24"/></g><g fill="none" stroke="#474556" stroke-width="2.6"><path d="M18.5,11 L16,9.8 L10,13 L10,17.5"/><path d="M20,11.8 L22,13 L22,22.5 L20.5,23.3"/><path d="M10,20 L10,22.5 L16,25.8 L18.5,24.5"/></g></svg>
<div class="t" style="left:46px;top:16.4px;font-size:25.5px;color:#666;font-weight:400;letter-spacing:0.3px;">onshape</div>
<svg class="a" style="left:167px;top:20px;" width="27" height="23" viewBox="0 0 27 23"><path d="M1,3 L26,3 M1,11.5 L26,11.5 M1,20 L26,20" stroke="#333" stroke-width="4"/></svg>
<div class="t" style="left:211px;top:15.9px;font-size:32px;color:#333;font-weight:700;letter-spacing:-0.2px;">2B - Basic Shooter</div>
<div class="t" style="left:505px;top:24.4px;font-size:22px;color:#9a9a9a;font-weight:400;">Main</div>
<svg class="a" style="left:571px;top:20px;" width="25" height="25" viewBox="0 0 25 25"><path d="M10,15 L15,10 M8,11 L5,14 Q2,17 5,20 Q8,23 11,20 L14,17 M11,8 L14,5 Q17,2 20,5 Q23,8 20,11 L17,14" fill="none" stroke="#333" stroke-width="2.2"/></svg>
<svg class="a" style="left:608px;top:20px;" width="28" height="23" viewBox="0 0 28 23"><path d="M1,4 L1,21 L27,21 L27,7 L13,7 L10.5,2 L2,2 Z" fill="none" stroke="#888" stroke-width="1.6" stroke-linejoin="round"/></svg>
<div class="t" style="left:642px;top:22.4px;font-size:22px;color:#888;font-weight:400;letter-spacing:0.6px;">Stage 2</div>
<svg class="a" style="left:828px;top:18px;" width="27" height="26" viewBox="0 0 27 26"><path d="M1,8 L13.5,2 L26,8 L13.5,14 Z" fill="#1a56b8"/><path d="M6,11 L6,17 Q13.5,21 21,17 L21,11 L13.5,15 Z" fill="#1a56b8"/><path d="M4,9 L4,19" stroke="#1a56b8" stroke-width="2"/><path d="M2,22 L4,17 L6,22 Z" fill="#1a56b8"/></svg>
<svg class="a" style="left:866px;top:17px;" width="30" height="30" viewBox="0 0 30 30"><circle cx="15" cy="15" r="12.5" fill="none" stroke="#333" stroke-width="2.4"/><path d="M8,6 Q11,9 9,12 Q12,14 12,18 Q10,21 11,25 Q6,22 4,16 Q5,10 8,6 Z M16,4 Q19,7 22,6 Q25,9 24,13 Q20,12 19,16 Q22,20 20,25 Q16,22 16,18 Q13,15 16,12 Q14,8 16,4Z" fill="#333"/></svg>
<svg class="a" style="left:929px;top:16px;" width="31" height="28" viewBox="0 0 31 28"><path d="M2,4 L2,25 L8,25 M2,4 L8,4 L8,1.5 L16,1.5 L16,4 L21,4 L21,9" fill="none" stroke="#333" stroke-width="2.2"/><path d="M9,10 L22,10 L28,16 L28,27 L9,27 Z M22,10 L22,16 L28,16" fill="#f9f9f9" stroke="#333" stroke-width="2.2" stroke-linejoin="round"/></svg>
<div class="t" style="left:965px;top:22.2px;font-size:21px;color:#333;font-weight:400;">1</div>
<svg class="a" style="left:1004px;top:15px;" width="14" height="32" viewBox="0 0 14 32"><path d="M7,1 L7,5 M7,8 L7,10 M7,22 L7,24 M7,27 L7,31" stroke="#333" stroke-width="2.4"/><circle cx="7" cy="16" r="4.5" fill="#333"/></svg>
<div class="t" style="left:1036px;top:22.2px;font-size:21px;color:#333;font-weight:400;">0</div>
<svg class="a" style="left:1067px;top:15px;" width="31" height="30" viewBox="0 0 31 30"><path d="M2,13 L8,13 L8,28 L2,28 Z M8,14 L13,8 Q15,5 15,2 Q19,1 19,6 Q19,9 17,12 L26,12 Q29,13 28,16 L26,26 Q25,28 22,28 L8,28" fill="none" stroke="#333" stroke-width="2.2" stroke-linejoin="round"/></svg>
<div class="t" style="left:1107px;top:22.2px;font-size:21px;color:#333;font-weight:400;">0</div>
<svg class="a" style="left:1756px;top:16px;" width="32" height="32" viewBox="0 0 32 32"><path d="M7,2 Q3,2 3,6 L3,13 Q3,16 1,16 Q3,16 3,19 L3,26 Q3,30 7,30 M25,2 Q29,2 29,6 L29,13 Q29,16 31,16 Q29,16 29,19 L29,26 Q29,30 25,30" fill="none" stroke="#444" stroke-width="2.6"/><path d="M9,16 L14,21 L23,10" fill="none" stroke="#444" stroke-width="3.2"/></svg>
<svg class="a" style="left:1807px;top:19px;" width="26" height="27" viewBox="0 0 26 27"><rect x="1.5" y="1.5" width="23" height="24" rx="2" fill="none" stroke="#555" stroke-width="2"/><path d="M5,7 L7,9 L10,5 M5,13 L7,15 L10,11 M5,19 L7,21 L10,17" fill="none" stroke="#555" stroke-width="1.5"/><path d="M12,8 L21,8 M12,14 L21,14 M12,20 L21,20" stroke="#555" stroke-width="2.4"/></svg>
<svg class="a" style="left:1853px;top:19px;" width="30" height="28" viewBox="0 0 30 28"><rect x="2" y="2" width="10" height="10" fill="none" stroke="#555" stroke-width="2.2"/><rect x="2" y="16" width="10" height="10" fill="none" stroke="#555" stroke-width="2.2"/><rect x="16" y="16" width="11" height="10" fill="none" stroke="#555" stroke-width="2.2"/><path d="M22,1 L22,12 M16.5,6.5 L27.5,6.5" stroke="#555" stroke-width="2.4"/></svg>
<svg class="a" style="left:1902px;top:19px;" width="28" height="28" viewBox="0 0 28 28"><path d="M14,1 Q26,1 26,13 L27,18 L25,18 L25,23 Q25,26 21,26 L18,26 L18,28 L6,28 L6,21 Q1,17 1,12 Q2,1 14,1 Z" fill="#555"/><circle cx="11" cy="14" r="3.5" fill="none" stroke="#eee" stroke-width="2.6" stroke-dasharray="2 1.3"/><circle cx="18" cy="8" r="2.6" fill="none" stroke="#eee" stroke-width="2" stroke-dasharray="1.6 1"/></svg>
<div class="a" style="left:1946px;top:4px;width:88px;height:49px;background:#1a56b8;border-radius:7px"></div>
<div class="t" style="left:1964px;top:19.2px;font-size:21px;color:#fff;font-weight:400;">Share</div>
<svg class="a" style="left:2049px;top:18px;" width="30" height="30" viewBox="0 0 30 30"><circle cx="15" cy="15" r="14" fill="#555"/><path d="M10,11 Q10,6 15,6 Q20,6 20,11 Q20,14 16.5,15.5 L15.5,17 L15.5,19" fill="none" stroke="#f9f9f9" stroke-width="3.4"/><circle cx="15.5" cy="23.5" r="2" fill="#f9f9f9"/></svg>
<svg class="a" style="left:2088px;top:28px;" width="14" height="8" viewBox="0 0 14 8"><path d="M0,0 L14,0 L7,8 Z" fill="#444"/></svg>
<svg class="a" style="left:2119px;top:15px;" width="36" height="36" viewBox="0 0 36 36"><rect width="36" height="36" rx="3" fill="#6b6e66"/><rect y="0" width="36" height="14" fill="#8e9a86"/><ellipse cx="18" cy="17" rx="9" ry="11" fill="#c9a88c"/><path d="M8,16 Q8,4 18,4 Q29,4 28,18 L26,12 Q18,7 10,12 Z" fill="#6b5138"/><path d="M2,36 Q5,28 18,28 Q31,28 34,36 Z" fill="#3d434a"/></svg>
<div class="t" style="left:2163px;top:21.2px;font-size:21px;color:#333;font-weight:400;">Kelly</div>
<svg class="a" style="left:2219px;top:25px;" width="14" height="8" viewBox="0 0 14 8"><path d="M0,0 L14,0 L7,8 Z" fill="#444"/></svg>
<div class="a" style="left:165px;top:72px;width:3px;height:34px;background:#dcdcdc"></div>
<div class="a" style="left:298px;top:72px;width:3px;height:34px;background:#dcdcdc"></div>
<div class="a" style="left:586px;top:72px;width:3px;height:34px;background:#dcdcdc"></div>
<div class="a" style="left:1002px;top:72px;width:3px;height:34px;background:#dcdcdc"></div>
<div class="a" style="left:1138px;top:72px;width:3px;height:34px;background:#dcdcdc"></div>
<div class="a" style="left:1377px;top:72px;width:3px;height:34px;background:#dcdcdc"></div>
<div class="a" style="left:1586px;top:72px;width:3px;height:34px;background:#dcdcdc"></div>
<div class="a" style="left:1668px;top:72px;width:3px;height:34px;background:#dcdcdc"></div>
<div class="a" style="left:1752px;top:72px;width:3px;height:34px;background:#dcdcdc"></div>
<div class="a" style="left:1837px;top:72px;width:3px;height:34px;background:#dcdcdc"></div>
<svg class="a" style="left:560px;top:83px;" width="16" height="10" viewBox="0 0 16 10"><polyline points="1.5,1.5 8,8 14.5,1.5" fill="none" stroke="#333" stroke-width="2.8"/></svg>
<svg class="a" style="left:644px;top:83px;" width="16" height="10" viewBox="0 0 16 10"><polyline points="1.5,1.5 8,8 14.5,1.5" fill="none" stroke="#333" stroke-width="2.8"/></svg>
<svg class="a" style="left:773px;top:83px;" width="16" height="10" viewBox="0 0 16 10"><polyline points="1.5,1.5 8,8 14.5,1.5" fill="none" stroke="#333" stroke-width="2.8"/></svg>
<svg class="a" style="left:1061px;top:83px;" width="16" height="10" viewBox="0 0 16 10"><polyline points="1.5,1.5 8,8 14.5,1.5" fill="none" stroke="#333" stroke-width="2.8"/></svg>
<svg class="a" style="left:1298px;top:83px;" width="16" height="10" viewBox="0 0 16 10"><polyline points="1.5,1.5 8,8 14.5,1.5" fill="none" stroke="#333" stroke-width="2.8"/></svg>
<svg class="a" style="left:1643px;top:83px;" width="16" height="10" viewBox="0 0 16 10"><polyline points="1.5,1.5 8,8 14.5,1.5" fill="none" stroke="#333" stroke-width="2.8"/></svg>
<svg class="a" style="left:1727px;top:83px;" width="16" height="10" viewBox="0 0 16 10"><polyline points="1.5,1.5 8,8 14.5,1.5" fill="none" stroke="#333" stroke-width="2.8"/></svg>
<svg class="a" style="left:1811px;top:83px;" width="16" height="10" viewBox="0 0 16 10"><polyline points="1.5,1.5 8,8 14.5,1.5" fill="none" stroke="#333" stroke-width="2.8"/></svg>
<svg class="a" style="left:1895px;top:83px;" width="16" height="10" viewBox="0 0 16 10"><polyline points="1.5,1.5 8,8 14.5,1.5" fill="none" stroke="#333" stroke-width="2.8"/></svg>
<svg class="a" style="left:72px;top:74px;" width="26" height="26" viewBox="0 0 26 26"><path d="M10,1 L1,9.5 L10,18 L10,13 Q19,12 22,23 Q25,10 10,6 Z" fill="#999"/></svg>
<svg class="a" style="left:124px;top:74px;" width="26" height="26" viewBox="0 0 26 26"><path d="M16,1 L25,9.5 L16,18 L16,13 Q7,12 4,23 Q1,10 16,6 Z" fill="#999"/></svg>
<svg class="a" style="left:179px;top:74px;" width="28" height="27" viewBox="0 0 28 27"><path d="M5,21 L7,15 L21,1.5 L26,6 L12,20 Z M7,15 L12,20" fill="none" stroke="#444" stroke-width="1.8" stroke-linejoin="round"/><line x1="1" y1="25.5" x2="28" y2="25.5" stroke="#2e62ad" stroke-width="1.4"/></svg>
<div class="t" style="left:215px;top:78.2px;font-size:21px;color:#333;font-weight:400;">Sketch</div>
<svg class="a" style="left:312px;top:73px;" width="30" height="30" viewBox="0 0 30 30"><path d="M2,5 L5,2 L27,2 L28,4 L28,28 L5,28 L2,25 Z" fill="#fff" stroke="#333" stroke-width="1.6" stroke-linejoin="round"/><path d="M8,13 L11,10 L25,10 L25,27 L8,27 Z" fill="#999" stroke="#333" stroke-width="1.6" stroke-linejoin="round"/><path d="M8,13 L22,13 L25,10 M22,13 L22,27" fill="none" stroke="#333" stroke-width="1.2"/></svg>
<svg class="a" style="left:363px;top:73px;" width="30" height="30" viewBox="0 0 30 30"><path d="M26,9 Q20,2 13,3 Q3,5 3,15 Q3,26 14,27 Q21,27 25,22 Q19,24 17,19 L14,16 L17,12 Q19,7 26,9 Z" fill="#999" stroke="#333" stroke-width="1.6" stroke-linejoin="round"/><path d="M12,15 L28,15" stroke="#333" stroke-width="1.3" stroke-dasharray="3 2"/><circle cx="15" cy="15" r="2" fill="#fff" stroke="#333"/></svg>
<svg class="a" style="left:415px;top:73px;" width="30" height="30" viewBox="0 0 30 30"><path d="M3,24 Q2,16 9,15 Q14,15 14,10 Q14,3 21,3 Q28,3 28,7 Q28,11 22,11 Q21,17 16,21 Q12,25 8,28 Q3,29 3,24 Z" fill="#999" stroke="#333" stroke-width="1.6" stroke-linejoin="round"/><ellipse cx="24" cy="6" rx="4" ry="3" fill="#fff" stroke="#333" stroke-width="1.4"/></svg>
<svg class="a" style="left:465px;top:73px;" width="30" height="30" viewBox="0 0 30 30"><path d="M8,4 Q15,1 22,4 L27,27 Q15,30 3,27 Z" fill="#999" stroke="#333" stroke-width="1.6" stroke-linejoin="round"/><ellipse cx="15" cy="4" rx="7" ry="2.5" fill="#fff" stroke="#333" stroke-width="1.4"/></svg>
<svg class="a" style="left:516px;top:73px;" width="30" height="30" viewBox="0 0 30 30"><path d="M2,6 L6,3 Q15,6 27,2 L28,24 L8,28 L2,25 Z" fill="#999" stroke="#333" stroke-width="1.6" stroke-linejoin="round"/><path d="M6,3 L6,28 M6,7 Q15,9 27,5" fill="none" stroke="#333" stroke-width="1.2"/><path d="M16,9 L16,20 M12,16 L16,21 L20,16" fill="none" stroke="#111" stroke-width="2.2"/></svg>
<svg class="a" style="left:600px;top:73px;" width="30" height="30" viewBox="0 0 30 30"><path d="M2,10 Q4,2 13,2 L25,2 L28,5 L28,28 L5,28 L2,25 Z" fill="#fff" stroke="#333" stroke-width="1.6" stroke-linejoin="round"/><path d="M2,10 Q5,4 13,4 L17,2 Q8,2 2,10 Z" fill="#999" stroke="#333" stroke-width="1.6" stroke-linejoin="round"/><path d="M5,28 L5,13 Q6,5 14,5 L25,5 L28,2" fill="none" stroke="#333" stroke-width="1.2"/></svg>
<svg class="a" style="left:678px;top:73px;" width="30" height="30" viewBox="0 0 30 30"><path d="M2,10 L10,2 L25,2 L28,5 L28,28 L5,28 L2,25 Z" fill="#fff" stroke="#333" stroke-width="1.6" stroke-linejoin="round"/><path d="M2,10 L10,2 L13,5 L5,13 Z" fill="#999" stroke="#333" stroke-width="1.6" stroke-linejoin="round"/><path d="M5,13 L5,28 M13,5 L25,5 L28,2" fill="none" stroke="#333" stroke-width="1.2"/></svg>
<svg class="a" style="left:729px;top:73px;" width="30" height="30" viewBox="0 0 30 30"><path d="M2,27 L10,3 L14,1.5 L26,1.5 L28,4 L28,28 L5,28 Z" fill="#999" stroke="#333" stroke-width="1.6" stroke-linejoin="round"/><path d="M14,1.5 L13,5 L28,4 M13,5 L13,28" fill="none" stroke="#333" stroke-width="1.3"/><path d="M13,5 L28,4 L28,28 L13,28 Z" fill="#fff" stroke="#333" stroke-width="1.4"/></svg>
<svg class="a" style="left:807px;top:73px;" width="30" height="30" viewBox="0 0 30 30"><path d="M2,22 L23,3 L28,7 L28,28 L6,28 L2,25 Z" fill="#fff" stroke="#333" stroke-width="1.6" stroke-linejoin="round"/><path d="M6,22 L22,8 L22,22 Z" fill="#999" stroke="#333" stroke-width="1.6" stroke-linejoin="round"/><path d="M6,28 L6,22 L28,22" fill="none" stroke="#333" stroke-width="1.2"/></svg>
<svg class="a" style="left:857px;top:73px;" width="30" height="30" viewBox="0 0 30 30"><path d="M2,5 L5,2 L27,2 L28,4 L28,28 L5,28 L2,25 Z" fill="#fff" stroke="#333" stroke-width="1.6" stroke-linejoin="round"/><path d="M5,4 L5,28 M5,4 L27,4" fill="none" stroke="#333" stroke-width="1.2"/><path d="M9,5 L24,5 L24,23 L9,23 Z" fill="#999" stroke="#333" stroke-width="1.6" stroke-linejoin="round"/></svg>
<svg class="a" style="left:909px;top:73px;" width="30" height="30" viewBox="0 0 30 30"><path d="M2,5 L5,2 L27,2 L28,4 L28,28 L5,28 L2,25 Z" fill="#fff" stroke="#333" stroke-width="1.6" stroke-linejoin="round"/><circle cx="16" cy="16" r="9" fill="#999" stroke="#333" stroke-width="1.6" stroke-linejoin="round"/><circle cx="16" cy="16" r="5" fill="#666" stroke="#333" stroke-width="1.2"/><circle cx="14" cy="13" r="2" fill="#fff"/></svg>
<svg class="a" style="left:961px;top:73px;" width="28" height="30" viewBox="0 0 28 30"><path d="M3,6 Q3,2 13,2 Q24,2 24,6 L24,25 Q24,29 13,29 Q3,29 3,25 Z" fill="#fff" stroke="#333" stroke-width="1.6" stroke-linejoin="round"/><path d="M3,11 Q13,15 24,11 M3,16 Q13,20 24,16 M3,21 Q13,25 24,21" fill="none" stroke="#333" stroke-width="1.5"/><path d="M3,6 Q13,10 24,6 L24,11 Q13,15 3,11 Z M3,16 Q13,20 24,16 L24,21 Q13,25 3,21 Z" fill="#999"/></svg>
<svg class="a" style="left:1017px;top:73px;" width="30" height="30" viewBox="0 0 30 30"><rect x="2" y="2" width="13" height="13" fill="#fff" stroke="#333" stroke-width="1.6" stroke-linejoin="round"/><rect x="15" y="2" width="13" height="13" fill="#999" stroke="#333" stroke-width="1.6" stroke-linejoin="round"/><rect x="2" y="15" width="13" height="13" fill="#999" stroke="#333" stroke-width="1.6" stroke-linejoin="round"/><rect x="15" y="15" width="13" height="13" fill="#999" stroke="#333" stroke-width="1.6" stroke-linejoin="round"/></svg>
<svg class="a" style="left:1094px;top:73px;" width="30" height="30" viewBox="0 0 30 30"><path d="M2,5 L4,2 L10,2 L12,5 L12,28 L4,28 L2,26 Z" fill="#fff" stroke="#333" stroke-width="1.6" stroke-linejoin="round"/><path d="M17,5 L19,2 L25,2 L28,5 L28,28 L19,28 L17,26 Z" fill="#999" stroke="#333" stroke-width="1.6" stroke-linejoin="round"/><path d="M12,14 L17,17 M4,2 L4,28" fill="none" stroke="#333" stroke-width="1.2"/></svg>
<svg class="a" style="left:1151px;top:73px;" width="30" height="30" viewBox="0 0 30 30"><circle cx="11" cy="15" r="9.5" fill="none" stroke="#333" stroke-width="1.8"/><circle cx="19" cy="15" r="9.5" fill="none" stroke="#333" stroke-width="1.8"/><path d="M15,7 Q20,15 15,23 Q10,15 15,7 Z" fill="#999"/></svg>
<svg class="a" style="left:1203px;top:73px;" width="30" height="30" viewBox="0 0 30 30"><path d="M2,5 L5,2 L27,2 L28,4 L28,28 L5,28 L2,25 Z" fill="#fff" stroke="#333" stroke-width="1.6" stroke-linejoin="round"/><path d="M2,18 Q10,13 16,18 Q22,23 28,16" fill="none" stroke="#999" stroke-width="2.2"/><path d="M5,2 L5,28 M5,5 L27,5" fill="none" stroke="#333" stroke-width="1.2"/></svg>
<svg class="a" style="left:1254px;top:73px;" width="30" height="30" viewBox="0 0 30 30"><path d="M13,3 L19,1 L25,7 L19,13 L13,7 Z" fill="#999" stroke="#333" stroke-width="1.6" stroke-linejoin="round"/><path d="M2,17 L5,14 L13,14 L14,16 L14,28 L5,28 L2,25 Z" fill="#fff" stroke="#333" stroke-width="1.6" stroke-linejoin="round"/><path d="M6,10 Q6,4 12,3 M24,20 Q24,26 18,27" fill="none" stroke="#333" stroke-width="1.8"/></svg>
<svg class="a" style="left:1332px;top:73px;" width="30" height="30" viewBox="0 0 30 30"><path d="M2,5 L5,2 L22,2 L23,4 L23,24 L5,24 L2,21 Z" fill="#999" stroke="#333" stroke-width="1.6" stroke-linejoin="round"/><circle cx="21" cy="21" r="7.5" fill="#333" stroke="#fff" stroke-width="1.4"/><path d="M17.5,17.5 L24.5,24.5 M24.5,17.5 L17.5,24.5" stroke="#fff" stroke-width="2"/></svg>
<svg class="a" style="left:1389px;top:73px;" width="30" height="30" viewBox="0 0 30 30"><path d="M3,22 Q1,8 12,5 Q20,2 26,6 Q22,12 26,18 Q18,15 14,24 Z" fill="#999"/><path d="M10,10 L16,18 M10,10 L10,16 M10,10 L16,10" fill="none" stroke="#111" stroke-width="2"/><path d="M14,24 Q18,15 28,18 Q22,20 22,28 Z" fill="#fff" stroke="#333" stroke-width="1.2"/></svg>
<svg class="a" style="left:1440px;top:73px;" width="30" height="30" viewBox="0 0 30 30"><path d="M3,6 Q12,2 20,4 Q25,4 27,2 L27,16 Q20,20 12,18 Z" fill="#999"/><circle cx="21" cy="21" r="7.5" fill="#333" stroke="#fff" stroke-width="1.4"/><path d="M17.5,17.5 L24.5,24.5 M24.5,17.5 L17.5,24.5" stroke="#fff" stroke-width="2"/></svg>
<svg class="a" style="left:1491px;top:73px;" width="30" height="30" viewBox="0 0 30 30"><path d="M2,16 L8,16 L8,24 L22,24 L22,16 L28,16 L28,28 L2,28 Z" fill="#fff" stroke="#333" stroke-width="1.6" stroke-linejoin="round"/><path d="M10,16 L10,9 L6,9 L12,2 L18,9 L14,9 L14,16 Z" fill="#111"/></svg>
<svg class="a" style="left:1542px;top:73px;" width="30" height="30" viewBox="0 0 30 30"><path d="M6,5 Q16,1 26,6 L26,12 Q16,8 6,12 Z" fill="#999"/><path d="M2,18 L8,14 L28,14 L28,22 L22,28 L2,28 Z" fill="#fff" stroke="#333" stroke-width="1.6" stroke-linejoin="round"/><path d="M2,18 L22,18 L28,14 M22,18 L22,28" fill="none" stroke="#333" stroke-width="1.4"/></svg>
<svg class="a" style="left:1599px;top:73px;" width="30" height="30" viewBox="0 0 30 30"><path d="M3,2 L22,6 L27,7 L27,28 L3,25 Z" fill="#ddd" stroke="#333" stroke-width="1.8"/><path d="M14,5 L14,17 L27,18" fill="none" stroke="#333" stroke-width="1.8"/></svg>
<svg class="a" style="left:1682px;top:73px;" width="30" height="30" viewBox="0 0 30 30"><path d="M3,6 Q3,2 8,2 L8,22 Q8,26 13,26 L19,26 Q24,26 24,22 L24,2 Q28,2 28,6 L28,24 Q28,30 20,30 L11,30 Q3,30 3,24 Z" fill="#fff" stroke="#333" stroke-width="1.6" stroke-linejoin="round"/><path d="M8,2 L8,22 Q8,26 13,26 L19,26 Q24,26 24,22 L24,2 L19,2 L19,20 L13,20 L13,2 Z" fill="#999" stroke="#333" stroke-width="1.4"/></svg>
<svg class="a" style="left:1767px;top:73px;" width="30" height="30" viewBox="0 0 30 30"><path d="M3,6 L8,2 L26,2 L26,9 L14,9 L14,14 L22,14 L22,20 L14,20 L14,23 L26,23 L26,29 L8,29 L3,25 Z" fill="#999" stroke="#333" stroke-width="1.6" stroke-linejoin="round"/><path d="M3,6 L21,6 L26,2 M8,6 L8,29" fill="none" stroke="#333" stroke-width="1.3"/></svg>
<div class="t" style="left:1851px;top:70.2px;font-size:34px;color:#222;font-weight:400;font-family:'Liberation Serif',serif;font-style:italic;">x</div>
<div class="t" style="left:1867px;top:67.1px;font-size:20px;color:#222;font-weight:400;">+</div>
<div class="a" style="left:1936px;top:62px;width:237px;height:50px;background:#f2f2f2;border-radius:4px"></div>
<div class="t" style="left:1950px;top:77.6px;font-size:20.5px;color:#333;font-weight:400;">Search tools...</div>
<div class="a" style="left:2086px;top:76px;width:51px;height:27px;background:#f8f8f8;border:1px solid #c9c9c9;border-radius:3px;box-sizing:border-box"></div>
<div class="t" style="left:2090px;top:82.0px;font-size:16.5px;color:#444;font-weight:400;">alt/⌥</div>
<div class="a" style="left:2138px;top:76px;width:23px;height:27px;background:#f8f8f8;border:1px solid #c9c9c9;border-radius:3px;box-sizing:border-box"></div>
<div class="t" style="left:2143px;top:81.6px;font-size:17px;color:#444;font-weight:400;">c</div>
<svg class="a" style="left:1995px;top:130px;" width="230" height="230" viewBox="0 0 230 230">
<g fill="none" stroke="#e6e8ea" stroke-width="9">
<path d="M32,54 Q55,28 88,24"/><path d="M140,24 Q175,28 198,54"/>
</g>
<path d="M100,8 L118,22 L82,22 Z M18,120 L32,105 L32,135 Z M212,120 L198,105 L198,135 Z M100,232 L118,218 L82,218 Z" fill="#e3e5e7"/>
<path d="M25,45 L40,60 L20,64 Z M205,45 L190,60 L210,64 Z" fill="#e3e5e7"/>
<path d="M110,66 L165,84 Q172,88 172,96 L170,160 Q168,168 160,172 L115,188 Q108,190 100,188 L62,170 Q56,166 56,158 L56,98 Q56,90 62,86 Z" fill="#eef0f1" stroke="#e1e4e6" stroke-width="8"/>
<path d="M60,96 L112,118 L168,94 M112,118 L112,186" fill="none" stroke="#e1e4e6" stroke-width="8"/>
<line x1="95" y1="52" x2="95" y2="126" stroke="#7878e0" stroke-width="2"/>
<line x1="95" y1="126" x2="47" y2="166" stroke="#e85a5a" stroke-width="2"/>
<line x1="95" y1="126" x2="170" y2="152" stroke="#5ab85a" stroke-width="2"/>
</svg>
<div class="t" style="left:2083px;top:161.6px;font-size:17px;color:#6767d8;font-weight:400;">Z</div>
<div class="t" style="left:2032px;top:297.6px;font-size:17px;color:#d62828;font-weight:400;">X</div>
<div class="t" style="left:2174px;top:279.6px;font-size:17px;color:#4db04d;font-weight:400;">Y</div>
<div class="t" style="left:2067px;top:259.3px;font-size:15px;color:#333;font-weight:400;transform:rotate(12deg);transform-origin:left bottom;">Right</div>
<div class="t" style="left:2137px;top:262.8px;font-size:12px;color:#444;font-weight:400;transform:rotate(-55deg);transform-origin:left bottom;">Back</div>
<div class="t" style="left:2097px;top:209.0px;font-size:13px;color:#444;font-weight:400;transform:rotate(160deg);transform-origin:center;">Top</div>
<svg class="a" style="left:2158px;top:330px;" width="34" height="34" viewBox="0 0 34 34"><path d="M17,3 L30,9 L30,24 L17,31 L4,24 L4,9 Z" fill="#eee" stroke="#333" stroke-width="2"/><path d="M4,9 L17,15 L30,9 M17,15 L17,31" fill="none" stroke="#333" stroke-width="1.6"/><path d="M4,9 L17,15 L17,31 L4,24 Z" fill="#aaa"/></svg>
<svg class="a" style="left:2198px;top:343px;" width="14" height="8" viewBox="0 0 14 8"><path d="M0,0 L14,0 L7,8 Z" fill="#333"/></svg>
<div class="a" style="left:2193px;top:562px;width:47px;height:361px;background:#fff;border:1px solid #d0d0d0;border-right:none;box-sizing:border-box"></div>
<div class="a" style="left:2193px;top:610px;width:47px;height:1px;background:#d0d0d0"></div>
<div class="a" style="left:2193px;top:659px;width:47px;height:1px;background:#d0d0d0"></div>
<div class="a" style="left:2193px;top:708px;width:47px;height:1px;background:#d0d0d0"></div>
<div class="a" style="left:2193px;top:757px;width:47px;height:1px;background:#d0d0d0"></div>
<div class="a" style="left:2193px;top:775px;width:47px;height:1px;background:#d0d0d0"></div>
<div class="a" style="left:2193px;top:825px;width:47px;height:1px;background:#d0d0d0"></div>
<div class="a" style="left:2193px;top:874px;width:47px;height:1px;background:#d0d0d0"></div>
<div class="a" style="left:2193px;top:757px;width:47px;height:18px;background:#fff"></div>
<div class="a" style="left:2193px;top:757px;width:47px;height:1px;background:#d0d0d0"></div>
<div class="a" style="left:2193px;top:775px;width:47px;height:1px;background:#d0d0d0"></div>
<svg class="a" style="left:2202px;top:570px;" width="32" height="32" viewBox="0 0 32 32"><path d="M8,18 L14,4 Q16,1 19,3 L22,5 L16,18 Z" fill="#666"/><path d="M16,18 L22,8 Q24,6 26,8 L30,12 L26,18 Z" fill="#aaa"/><rect x="4" y="18" width="26" height="10" rx="2" fill="#fff" stroke="#555" stroke-width="1.6"/><path d="M13,18 L13,28 M22,18 L22,28" stroke="#555" stroke-width="1.2"/><rect x="22" y="18" width="8" height="10" fill="#ccc"/><circle cx="8.5" cy="23" r="1.6" fill="none" stroke="#555"/></svg>
<svg class="a" style="left:2202px;top:620px;" width="32" height="32" viewBox="0 0 32 32"><rect x="2" y="2" width="14" height="12" fill="#2a6fc9"/><path d="M2,6 L16,6 M2,10 L16,10 M6,2 L6,14 M11,2 L11,14" stroke="#fff" stroke-width="1"/><path d="M10,14 L20,9 L30,14 L30,25 L20,30 L10,25 Z M10,14 L20,19 L30,14 M20,19 L20,30" fill="#fff" stroke="#444" stroke-width="1.8" stroke-linejoin="round"/></svg>
<svg class="a" style="left:2202px;top:668px;" width="32" height="32" viewBox="0 0 32 32"><rect x="2" y="2" width="14" height="12" fill="#555"/><path d="M2,6 L16,6 M2,10 L16,10 M6,2 L6,14 M11,2 L11,14" stroke="#fff" stroke-width="1"/><path d="M11,14 L19,10 L27,14 L27,22 L19,26 L11,22 Z M11,14 L19,18 L27,14 M19,18 L19,26" fill="#fff" stroke="#444" stroke-width="1.6"/><path d="M6,16 Q4,16 4,20 Q4,24 2,24 Q4,24 4,28 Q4,31 7,31 M27,8 Q30,8 30,12 L30,18 Q30,20 32,20 Q30,20 30,24 Q30,28 27,28" fill="none" stroke="#444" stroke-width="1.5"/></svg>
<svg class="a" style="left:2200px;top:716px;" width="36" height="34" viewBox="0 0 36 34"><rect x="3" y="2" width="14" height="12" fill="#555"/><path d="M3,6 L17,6 M3,10 L17,10 M7,2 L7,14 M12,2 L12,14" stroke="#fff" stroke-width="1"/><path d="M6,8 Q1,18 6,30" fill="none" stroke="#222" stroke-width="2.6"/><path d="M28,14 Q33,22 28,30" fill="none" stroke="#222" stroke-width="2.6"/><text x="8" y="29" font-family="Liberation Serif" font-style="italic" font-weight="bold" font-size="20" fill="#222">x</text></svg>
<svg class="a" style="left:2200px;top:783px;" width="36" height="36" viewBox="0 0 36 36"><rect x="2" y="2" width="32" height="32" rx="5" fill="#ddd"/><rect x="5" y="6" width="26" height="24" fill="#111"/><rect x="7" y="8" width="22" height="20" fill="#1f5fd0"/><text x="8.5" y="24.5" font-family="Liberation Serif" font-weight="bold" font-size="15" letter-spacing="-1.2" fill="#fff">MK</text></svg>
<svg class="a" style="left:2200px;top:832px;" width="36" height="36" viewBox="0 0 36 36"><rect x="2" y="2" width="32" height="32" rx="5" fill="#ddd"/><rect x="5" y="12" width="26" height="18" rx="3" fill="#222"/><circle cx="12" cy="20" r="4" fill="#fff"/><circle cx="24" cy="20" r="4" fill="#fff"/><circle cx="12" cy="20" r="2" fill="#2a6fc9"/><circle cx="24" cy="20" r="2" fill="#2a6fc9"/><path d="M18,12 L18,7" stroke="#222" stroke-width="2"/><path d="M9,7 Q9,4 11,3 M27,7 Q27,4 25,3" fill="none" stroke="#2a6fc9" stroke-width="1.3"/></svg>
<svg class="a" style="left:2200px;top:881px;" width="36" height="36" viewBox="0 0 36 36"><rect x="2" y="2" width="32" height="32" rx="5" fill="#ddd"/><path d="M18,5 L32,30 L22,30 Q24,22 16,22 Q12,24 10,30 L4,30 Z" fill="#29a3dc"/></svg>
<svg class="a" style="left:2094px;top:1363px;" width="26" height="22" viewBox="0 0 26 22"><ellipse cx="17" cy="8" rx="7.5" ry="5.5" fill="#fff" stroke="#222" stroke-width="1.8"/><ellipse cx="17" cy="8" rx="3" ry="1.7" fill="none" stroke="#222" stroke-width="1.5"/><path d="M1,11 L10,11 L10,19 L1,19 Z M10,11 L17,11 Q24.5,11 24.5,14 Q24.5,19 17,19 L10,19" fill="#fff" stroke="#222" stroke-width="1.8"/><path d="M3,19 L3,16 M6,19 L6,17 M9,19 L9,16 M12,19 L12,17 M15,19 L15,16" stroke="#222" stroke-width="1"/></svg>
<svg class="a" style="left:2142px;top:1363px;" width="32" height="22" viewBox="0 0 32 22"><path d="M1,20 Q1,1 16,1 Q31,1 31,20 Z" fill="#fff" stroke="#222" stroke-width="2"/><path d="M7,17 Q7,7 16,7 Q25,7 25,17 L19,17 Q19,13 16,13 Q13,13 13,17 Z" fill="#fff" stroke="#222" stroke-width="1.6"/><path d="M4,15 L6,15 M5,9 L7,10 M10,4 L11,6 M16,3 L16,5 M22,4 L21,6 M27,9 L25,10 M28,15 L26,15" stroke="#222" stroke-width="1"/></svg>
<svg class="a" style="left:2200px;top:1362px;" width="24" height="24" viewBox="0 0 24 24"><path d="M3,2 L21,2 M12,2 L12,21 M2,22 L22,22" stroke="#222" stroke-width="2.6"/><path d="M5,3 L2,15 L8,15 Z M19,3 L16,15 L22,15 Z" fill="none" stroke="#222" stroke-width="1.6"/><path d="M2,15 L8,15 M16,15 L22,15" stroke="#222" stroke-width="2.4"/></svg>
<div class="a" style="left:118px;top:1397px;width:300px;height:42px;background:#fff;border-radius:6px 6px 0 0"></div>
<div class="a" style="left:120px;top:1434px;width:297px;height:4px;background:#1a4fa8;border-radius:0 0 2px 2px"></div>
<div class="a" style="left:421px;top:1397px;width:299px;height:40px;background:#e6e6e6;border-radius:6px 6px 6px 6px"></div>
<svg class="a" style="left:72px;top:1404px;" width="24" height="24" viewBox="0 0 24 24"><path d="M12,2 L12,22 M2,12 L22,12" stroke="#555" stroke-width="3.4"/></svg>
<svg class="a" style="left:135px;top:1402px;" width="26" height="26" viewBox="0 0 26 26"><circle cx="13" cy="13" r="12" fill="#6a9bd3"/><ellipse cx="13" cy="13" rx="5" ry="6.5" fill="none" stroke="#fff" stroke-width="3"/><line x1="13" y1="1" x2="13" y2="5" stroke="#fff" stroke-width="1.2"/><line x1="13" y1="21" x2="13" y2="25" stroke="#fff" stroke-width="1.2"/></svg>
<svg class="a" style="left:438px;top:1402px;" width="26" height="26" viewBox="0 0 26 26"><circle cx="13" cy="13" r="12" fill="#6a9bd3"/><ellipse cx="13" cy="13" rx="5" ry="6.5" fill="none" stroke="#fff" stroke-width="3"/><line x1="13" y1="1" x2="13" y2="5" stroke="#fff" stroke-width="1.2"/><line x1="13" y1="21" x2="13" y2="25" stroke="#fff" stroke-width="1.2"/></svg>
<svg class="a" style="left:165px;top:1402px;" width="28" height="28" viewBox="0 0 28 28"><path d="M2,9 L5,7 L10,7 L11,9 L11,27 L4,27 L2,25 Z M5,7 L5,27" fill="#fff" stroke="#333" stroke-width="1.5"/><path d="M13,4 L16,1.5 L24,1.5 L26,4 L26,27 L16,27 L13,25 Z M16,1.5 L16,27" fill="#fff" stroke="#333" stroke-width="1.5"/></svg>
<svg class="a" style="left:466px;top:1400px;" width="30" height="30" viewBox="0 0 30 30"><path d="M2,6 L6,2 L27,2 L28,4 L28,28 L6,28 L2,24 Z" fill="#fff" stroke="#333" stroke-width="1.6"/><path d="M6,2 L6,28" stroke="#333" stroke-width="1.2"/><path d="M2,6 L6,2 L17,2 L17,17 L6,17 L2,13 Z" fill="#999" stroke="#333" stroke-width="1.4"/></svg>
<div class="t" style="left:197px;top:1407.2px;font-size:21px;color:#333;font-weight:400;">Shooter Part Studio</div>
<div class="t" style="left:500px;top:1407.2px;font-size:21px;color:#777;font-weight:400;">Shooter Assembly</div>
</body></html>
